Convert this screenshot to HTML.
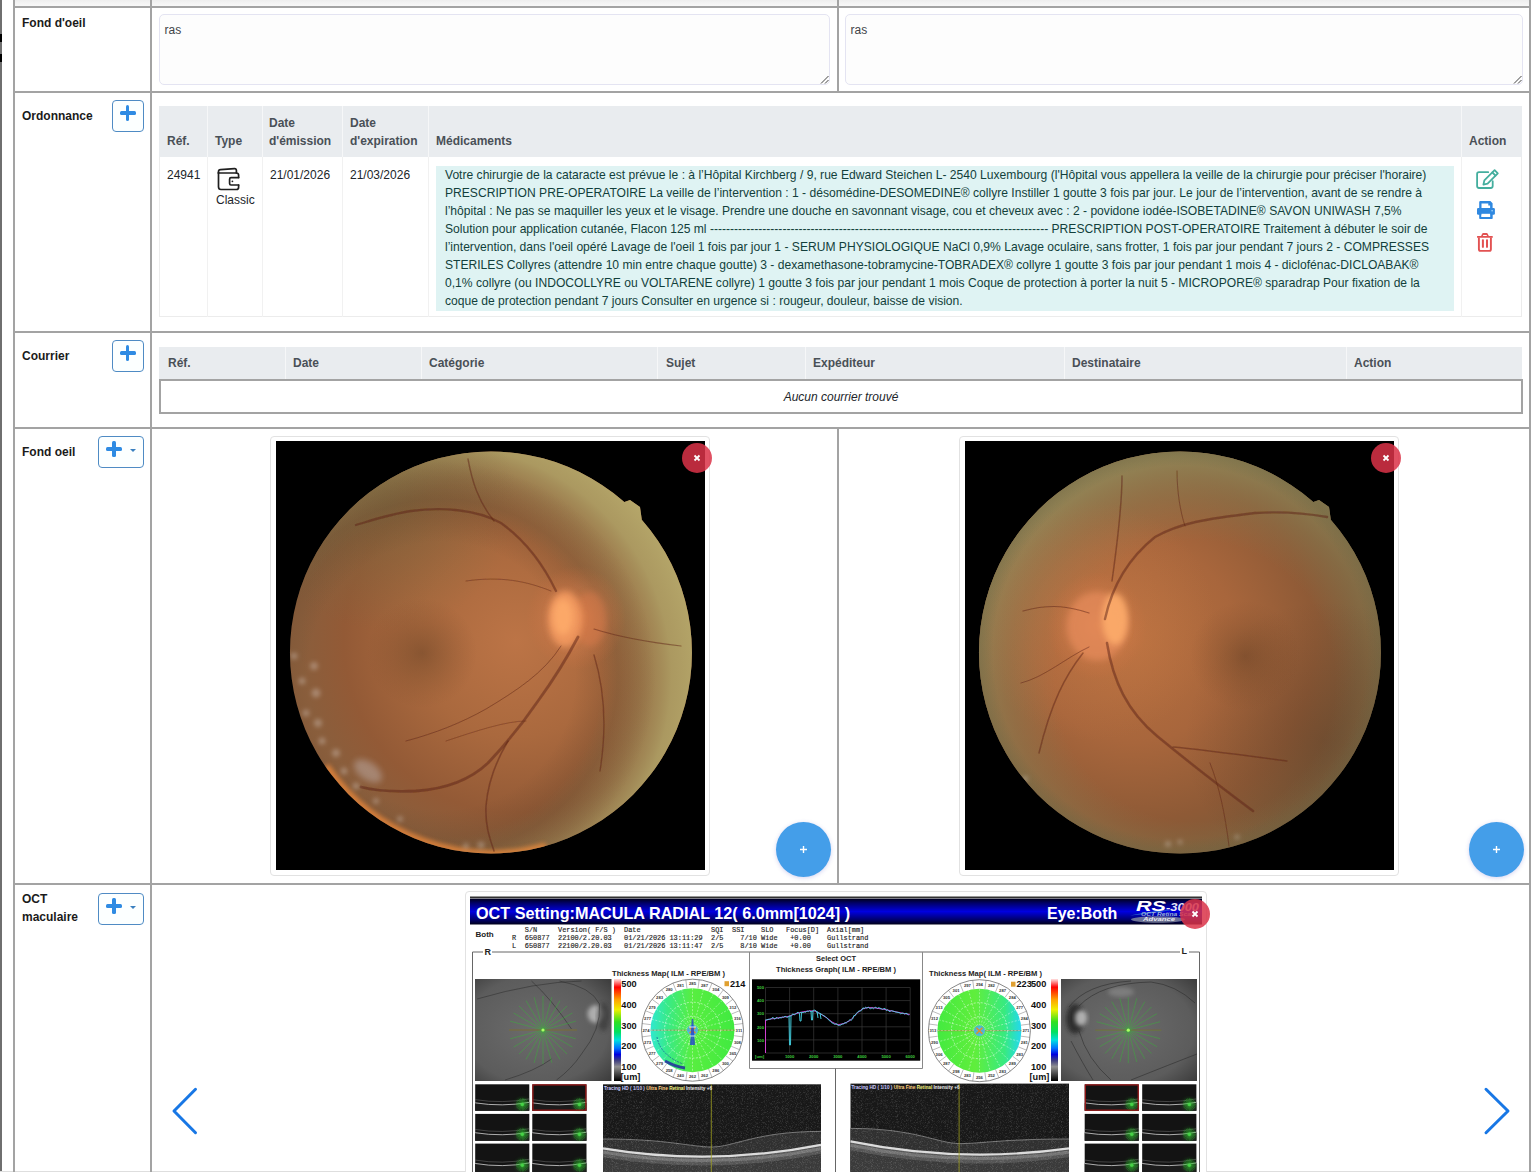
<!DOCTYPE html>
<html><head><meta charset="utf-8">
<style>
*{margin:0;padding:0;box-sizing:border-box}
html,body{width:1536px;height:1172px;overflow:hidden;background:#fff}
body{position:relative;font-family:"Liberation Sans",sans-serif;font-size:12px;color:#212529}
.a{position:absolute}
.hl{position:absolute;height:2px;background:#a3a3a3}
.vl{position:absolute;width:2px;background:#a3a3a3}
.lbl{position:absolute;font-weight:bold;font-size:12px;color:#1b1b1b;line-height:18px;white-space:nowrap}
.ta{position:absolute;border:1px solid #e4e4f2;border-radius:5px;background:#fdfdfd;color:#3f4448;font-size:12px}
.btn{position:absolute;border:1px solid #4f8bc4;border-radius:4px;background:#fcffff}
.plus{position:absolute;background:#2f8be3;border-radius:1.5px}
.th{position:absolute;font-weight:bold;color:#495057;line-height:18px;white-space:nowrap}
.td{position:absolute;color:#212529;line-height:18px;white-space:nowrap}
.med{position:absolute;color:#123f3b;line-height:18px;white-space:nowrap;font-size:12.1px}
</style></head><body>
<!-- page left edge -->
<div class="a" style="left:0;top:0;width:2px;height:1172px;background:#6f6f6f"></div>
<div class="a" style="left:0;top:34px;width:2px;height:8px;background:#000"></div>
<div class="a" style="left:0;top:54px;width:2px;height:8px;background:#000"></div>
<!-- top partial row -->
<div class="a" style="left:15px;top:0;width:1514px;height:6px;background:linear-gradient(#eeeeee,#f8f8f8)"></div>
<div class="a" style="left:0;top:1171px;width:1536px;height:1px;background:#dedede"></div>

<!-- grid lines -->
<div class="vl" style="left:13px;top:0;height:1172px"></div>
<div class="vl" style="left:1529px;top:0;height:1172px"></div>
<div class="vl" style="left:150px;top:0;height:1172px"></div>
<div class="vl" style="left:837px;top:0;height:92px"></div>
<div class="vl" style="left:837px;top:428px;height:456px"></div>
<div class="hl" style="left:13px;top:6px;width:1518px"></div>
<div class="hl" style="left:13px;top:91px;width:1518px"></div>
<div class="hl" style="left:13px;top:331px;width:1518px"></div>
<div class="hl" style="left:13px;top:427px;width:1518px"></div>
<div class="hl" style="left:13px;top:883px;width:1518px"></div>

<!-- labels -->
<div class="lbl" style="left:22px;top:14px">Fond d'oeil</div>
<div class="lbl" style="left:22px;top:107px">Ordonnance</div>
<div class="lbl" style="left:22px;top:347px">Courrier</div>
<div class="lbl" style="left:22px;top:443px">Fond oeil</div>
<div class="lbl" style="left:22px;top:890px">OCT<br>maculaire</div>

<!-- buttons -->
<div class="btn" style="left:112px;top:100px;width:32px;height:32px"><div class="plus" style="left:6.6px;top:10.2px;width:16px;height:3.7px"></div><div class="plus" style="left:12.75px;top:4.3px;width:3.7px;height:15.5px"></div></div>
<div class="btn" style="left:112px;top:340px;width:32px;height:32px"><div class="plus" style="left:6.6px;top:10.2px;width:16px;height:3.7px"></div><div class="plus" style="left:12.75px;top:4.3px;width:3.7px;height:15.5px"></div></div>
<div class="btn" style="left:98px;top:436px;width:46px;height:32px"><div class="plus" style="left:7.1px;top:10.3px;width:16px;height:3.7px"></div><div class="plus" style="left:13.25px;top:4.4px;width:3.7px;height:15.5px"></div><div class="a" style="left:31px;top:12px;width:0;height:0;border-left:3px solid transparent;border-right:3px solid transparent;border-top:3px solid #3a80c0"></div></div>
<div class="btn" style="left:98px;top:893px;width:46px;height:32px"><div class="plus" style="left:7.1px;top:10.3px;width:16px;height:3.7px"></div><div class="plus" style="left:13.25px;top:4.4px;width:3.7px;height:15.5px"></div><div class="a" style="left:31px;top:12px;width:0;height:0;border-left:3px solid transparent;border-right:3px solid transparent;border-top:3px solid #3a80c0"></div></div>

<!-- textareas -->
<div class="ta" style="left:159px;top:14px;width:671px;height:71px"><div class="a" style="left:4.5px;top:8px">ras</div><svg class="a" style="left:658px;top:58px" width="12" height="12" viewBox="0 0 12 12"><path d="M3,10.5 L10.5,3 M7,10.5 L10.5,7" stroke="#444" stroke-width="1"/></svg></div>
<div class="ta" style="left:845px;top:14px;width:678px;height:71px"><div class="a" style="left:4.5px;top:8px">ras</div><svg class="a" style="left:665px;top:58px" width="12" height="12" viewBox="0 0 12 12"><path d="M3,10.5 L10.5,3 M7,10.5 L10.5,7" stroke="#444" stroke-width="1"/></svg></div>

<!-- ordonnance table -->
<div class="a" style="left:159px;top:106px;width:1363px;height:211px;border:1px solid #ececec;border-top:0"></div>
<div class="a" style="left:159px;top:106px;width:1363px;height:51px;background:#e9ecef"></div>
<div class="a" style="left:207px;top:106px;width:1px;height:51px;background:#f6f7f8"></div>
<div class="a" style="left:207px;top:157px;width:1px;height:160px;background:#f1f1f1"></div>
<div class="a" style="left:262px;top:106px;width:1px;height:51px;background:#f6f7f8"></div>
<div class="a" style="left:262px;top:157px;width:1px;height:160px;background:#f1f1f1"></div>
<div class="a" style="left:342px;top:106px;width:1px;height:51px;background:#f6f7f8"></div>
<div class="a" style="left:342px;top:157px;width:1px;height:160px;background:#f1f1f1"></div>
<div class="a" style="left:428px;top:106px;width:1px;height:51px;background:#f6f7f8"></div>
<div class="a" style="left:428px;top:157px;width:1px;height:160px;background:#f1f1f1"></div>
<div class="a" style="left:1461px;top:106px;width:1px;height:51px;background:#f6f7f8"></div>
<div class="a" style="left:1461px;top:157px;width:1px;height:160px;background:#f1f1f1"></div>
<div class="th" style="left:167px;top:132px">Réf.</div>
<div class="th" style="left:215px;top:132px">Type</div>
<div class="th" style="left:269px;top:114px">Date<br>d'émission</div>
<div class="th" style="left:350px;top:114px">Date<br>d'expiration</div>
<div class="th" style="left:436px;top:132px">Médicaments</div>
<div class="th" style="left:1469px;top:132px">Action</div>
<div class="td" style="left:167px;top:166px">24941</div>
<div class="td" style="left:216px;top:191px">Classic</div>
<div class="td" style="left:270px;top:166px">21/01/2026</div>
<div class="td" style="left:350px;top:166px">21/03/2026</div>
<svg class="a" style="left:210px;top:160px" width="36" height="36" viewBox="0 0 36 36"><g fill="none" stroke="#1f1f1f" stroke-width="1.7" stroke-linejoin="round" stroke-linecap="round">
<path d="M8.5,12.5 L8.5,26.8 Q8.5,29.5 11,29.5 L26.5,29.5 Q28.6,29.5 28.6,27.2 L28.6,25"/>
<path d="M28.6,17.5 L28.6,15.3 Q28.6,13 26.3,13 L8.5,13"/>
<path d="M8.5,13 L8.5,11.6 Q8.5,9.8 10.6,9.6 L24.5,8.6 Q26.4,8.5 26.4,10.6 L26.4,13"/>
<path d="M28.6,17.6 L21,17.6 Q19.6,17.6 19.6,19.2 L19.6,23.4 Q19.6,25 21,25 L28.6,25"/>
</g><circle cx="22.4" cy="21.3" r="0.9" fill="#1f1f1f"/></svg>
<div class="a" style="left:436px;top:166px;width:1018px;height:145px;background:#dff3f3"></div>
<div class="med" style="left:445px;top:166px">Votre chirurgie de la cataracte est prévue le : à l’Hôpital Kirchberg / 9, rue Edward Steichen L- 2540 Luxembourg (l'Hôpital vous appellera la veille de la chirurgie pour préciser l'horaire)</div>
<div class="med" style="left:445px;top:184px">PRESCRIPTION PRE-OPERATOIRE La veille de l’intervention : 1 - désomédine-DESOMEDINE® collyre Instiller 1 goutte 3 fois par jour. Le jour de l’intervention, avant de se rendre à</div>
<div class="med" style="left:445px;top:202px">l’hôpital : Ne pas se maquiller les yeux et le visage. Prendre une douche en savonnant visage, cou et cheveux avec : 2 - povidone iodée-ISOBETADINE® SAVON UNIWASH 7,5%</div>
<div class="med" style="left:445px;top:220px">Solution pour application cutanée, Flacon 125 ml ------------------------------------------------------------------------------------ PRESCRIPTION POST-OPERATOIRE Traitement à débuter le soir de</div>
<div class="med" style="left:445px;top:238px">l’intervention, dans l'oeil opéré Lavage de l'oeil 1 fois par jour 1 - SERUM PHYSIOLOGIQUE NaCl 0,9% Lavage oculaire, sans frotter, 1 fois par jour pendant 7 jours 2 - COMPRESSES</div>
<div class="med" style="left:445px;top:256px">STERILES Collyres (attendre 10 min entre chaque goutte) 3 - dexamethasone-tobramycine-TOBRADEX® collyre 1 goutte 3 fois par jour pendant 1 mois 4 - diclofénac-DICLOABAK®</div>
<div class="med" style="left:445px;top:274px">0,1% collyre (ou INDOCOLLYRE ou VOLTARENE collyre) 1 goutte 3 fois par jour pendant 1 mois Coque de protection à porter la nuit 5 - MICROPORE® sparadrap Pour fixation de la</div>
<div class="med" style="left:445px;top:292px">coque de protection pendant 7 jours Consulter en urgence si : rougeur, douleur, baisse de vision.</div>
<svg class="a" style="left:1472px;top:165px" width="30" height="28" viewBox="0 0 30 28"><g fill="none" stroke="#44ae9e" stroke-width="1.8" stroke-linejoin="round" stroke-linecap="round">
<path d="M16.2,7.2 L7,7.2 Q5.1,7.2 5.1,9.1 L5.1,21.1 Q5.1,23 7,23 L18.8,23 Q20.7,23 20.7,21.1 L20.7,16.2"/>
<path d="M11.4,19.6 L12.35,15.4 L22.6,5.2 L25.8,8.4 L15.6,18.66 Z"/><path d="M20.4,7.5 L23.5,10.6"/></g></svg>
<svg class="a" style="left:1472px;top:196px" width="30" height="28" viewBox="0 0 30 28"><g fill="#2f88e0">
<path fill-rule="evenodd" d="M7.2,12.5 L7.2,6.3 Q7.2,5.1 8.4,5.1 L18.4,5.1 L20.6,7.3 L20.6,12.5 Z M9.5,7.6 L9.5,12.8 L18.1,12.8 L18.1,9.6 L16.3,9.6 L16.3,7.6 Z"/>
<rect x="5" y="12" width="17.9" height="6.7" rx="1.3"/>
<path fill-rule="evenodd" d="M7.2,17.5 L20.7,17.5 L20.7,22.2 Q20.7,23 19.9,23 L8,23 Q7.2,23 7.2,22.2 Z M9.5,17.8 L9.5,21 L18.1,21 L18.1,17.8 Z"/>
</g><rect x="9.5" y="17.8" width="8.6" height="3.2" fill="#fff"/><circle cx="20.1" cy="14.8" r="0.7" fill="#bfe8ff"/></svg>
<svg class="a" style="left:1472px;top:228px" width="30" height="28" viewBox="0 0 30 28"><g fill="#e25252">
<rect x="5" y="8" width="15.8" height="1.7" rx="0.5"/>
<path fill-rule="evenodd" d="M9,8.2 L10,5.9 Q10.4,5.1 11.3,5.1 L14.6,5.1 Q15.5,5.1 15.9,5.9 L16.9,8.2 Z M10.9,7.9 L11.3,6.9 L14.6,6.9 L15,7.9 Z"/>
<rect x="9.9" y="11.2" width="2" height="8.6" rx="0.9"/><rect x="14" y="11.2" width="2" height="8.6" rx="0.9"/></g>
<path d="M6.9,9.5 L6.9,21.3 Q6.9,22.9 8.5,22.9 L17.3,22.9 Q18.9,22.9 18.9,21.3 L18.9,9.5" fill="none" stroke="#e25252" stroke-width="1.9"/></svg>

<!-- courrier table -->
<div class="a" style="left:159px;top:347px;width:1363px;height:33px;background:#e9ecef"></div>
<div class="a" style="left:285px;top:347px;width:1px;height:33px;background:#f6f7f8"></div>
<div class="a" style="left:421px;top:347px;width:1px;height:33px;background:#f6f7f8"></div>
<div class="a" style="left:657px;top:347px;width:1px;height:33px;background:#f6f7f8"></div>
<div class="a" style="left:805px;top:347px;width:1px;height:33px;background:#f6f7f8"></div>
<div class="a" style="left:1064px;top:347px;width:1px;height:33px;background:#f6f7f8"></div>
<div class="a" style="left:1346px;top:347px;width:1px;height:33px;background:#f6f7f8"></div>
<div class="th" style="left:168px;top:354px">Réf.</div>
<div class="th" style="left:293px;top:354px">Date</div>
<div class="th" style="left:429px;top:354px">Catégorie</div>
<div class="th" style="left:666px;top:354px">Sujet</div>
<div class="th" style="left:813px;top:354px">Expéditeur</div>
<div class="th" style="left:1072px;top:354px">Destinataire</div>
<div class="th" style="left:1354px;top:354px">Action</div>
<div class="a" style="left:159px;top:379px;width:1364px;height:35px;border:2px solid #a3a3a3"></div>
<div class="td" style="left:159px;top:388px;width:1364px;text-align:center;font-style:italic">Aucun courrier trouvé</div>

<!--FUNDUS--><!-- fundus frames -->
<div class="a" style="left:270px;top:436px;width:440px;height:440px;border:1px solid #e2e2e2;border-radius:4px;background:#fff"></div>
<div class="a" style="left:959px;top:436px;width:440px;height:440px;border:1px solid #e2e2e2;border-radius:4px;background:#fff"></div>
<svg class="a" style="left:276px;top:441px" width="429" height="429" viewBox="0 0 429 429">
<defs>
<clipPath id="f1c"><path d="M215,10.5 A201,201 0 1,1 214.9,10.5 Z M340,64 L354,59 L364,66 L366,80 L352,76 Z"/></clipPath>

<radialGradient id="f1b" cx="240" cy="200" r="215" gradientUnits="userSpaceOnUse"><stop offset="0" stop-color="#bc7446"/><stop offset="0.45" stop-color="#aa693e"/><stop offset="0.8" stop-color="#935a36"/><stop offset="1" stop-color="#8a5e3c"/></radialGradient>
<radialGradient id="f1t" cx="165" cy="235" r="268" gradientUnits="userSpaceOnUse"><stop offset="0.6" stop-color="#8a7a50" stop-opacity="0"/><stop offset="0.74" stop-color="#9a8a58" stop-opacity="0.5"/><stop offset="0.86" stop-color="#ad9e64" stop-opacity="0.92"/><stop offset="1" stop-color="#b8aa6c" stop-opacity="1"/></radialGradient>
<radialGradient id="f1o" cx="165" cy="235" r="268" gradientUnits="userSpaceOnUse"><stop offset="0.5" stop-color="#5a4028" stop-opacity="0"/><stop offset="0.66" stop-color="#5a4028" stop-opacity="0.28"/><stop offset="0.8" stop-color="#5a4028" stop-opacity="0"/></radialGradient>
<radialGradient id="f1k" cx="110" cy="60" r="130" gradientUnits="userSpaceOnUse"><stop offset="0" stop-color="#7a6a40" stop-opacity="0.55"/><stop offset="1" stop-color="#7a6a40" stop-opacity="0"/></radialGradient>
<radialGradient id="f1r" cx="215" cy="211.5" r="201" gradientUnits="userSpaceOnUse"><stop offset="0.9" stop-color="#e07a38" stop-opacity="0"/><stop offset="1" stop-color="#f08a3a" stop-opacity="0.8"/></radialGradient>
<radialGradient id="f1f" cx="146" cy="212" r="55" gradientUnits="userSpaceOnUse"><stop offset="0" stop-color="#5a3a20" stop-opacity="0.42"/><stop offset="0.4" stop-color="#6a4426" stop-opacity="0.28"/><stop offset="1" stop-color="#7a4a2a" stop-opacity="0"/></radialGradient>
<radialGradient id="f1dg" cx="0.5" cy="0.5" r="0.5"><stop offset="0" stop-color="#e88a50" stop-opacity="0.7"/><stop offset="0.6" stop-color="#d88050" stop-opacity="0.35"/><stop offset="1" stop-color="#d07040" stop-opacity="0"/></radialGradient>
<filter id="f1bl" x="-10%" y="-10%" width="120%" height="120%"><feGaussianBlur stdDeviation="0.6"/></filter>
<filter id="f1bd" x="-50%" y="-50%" width="200%" height="200%"><feGaussianBlur stdDeviation="3"/></filter>
<filter id="f1bs" x="-50%" y="-50%" width="200%" height="200%"><feGaussianBlur stdDeviation="2"/></filter>
</defs>
<rect width="429" height="429" fill="#000"/>
<g clip-path="url(#f1c)">
<rect width="429" height="429" fill="url(#f1b)"/>
<rect width="429" height="429" fill="url(#f1t)"/>
<rect width="429" height="429" fill="url(#f1k)"/>
<rect width="429" height="429" fill="url(#f1o)"/>
<path d="M50,325 A201,201 0 0,0 270,405" fill="none" stroke="#f08a3a" stroke-width="7" opacity="0.75" filter="url(#f1bs)"/><ellipse cx="92" cy="330" rx="16" ry="9" transform="rotate(35 92 330)" fill="#d8dce8" opacity="0.32" filter="url(#f1bd)"/>
<rect width="429" height="429" fill="url(#f1f)"/>
<ellipse cx="300" cy="177" rx="50" ry="52" fill="url(#f1dg)"/>
<ellipse cx="314" cy="178" rx="16" ry="27" fill="#dc7a4c" opacity="0.45" filter="url(#f1bd)"/>
<ellipse cx="289" cy="178" rx="17" ry="28" fill="#f39a60" opacity="0.9" filter="url(#f1bd)"/>
<ellipse cx="287" cy="176" rx="10" ry="18" fill="#ffad6c" opacity="0.8" filter="url(#f1bd)"/>
<g fill="none" stroke="#5e2414" stroke-opacity="0.5" stroke-linecap="round" filter="url(#f1bl)"><path d="M302,196 C292,215 278,238 262,260 C245,285 228,305 212,322 C195,338 170,348 140,350 C115,351 100,350 85,346" stroke-width="2.8"/><path d="M232,300 C220,320 212,340 210,365 C209,385 214,398 218,410" stroke-width="1.6"/><path d="M280,150 C268,125 250,100 225,82 C200,68 165,66 135,70 C115,73 100,78 80,84" stroke-width="2.3"/><path d="M192,18 C196,40 202,60 218,80" stroke-width="1.4"/><path d="M318,188 C340,195 362,200 405,205" stroke-width="1.2"/><path d="M318,214 C326,240 332,280 324,330" stroke-width="1.4"/><path d="M285,205 C268,232 240,250 210,268 C185,282 160,292 130,300" stroke-width="1.0"/><path d="M275,150 C250,140 225,135 190,140" stroke-width="0.9"/><path d="M250,280 C230,280 200,290 170,300" stroke-width="0.8"/></g>
<g fill="#e0d8d0" fill-opacity="0.33" filter="url(#f1bs)"><circle cx="18" cy="215" r="3.5"/><circle cx="38" cy="225" r="4"/><circle cx="26" cy="240" r="3.5"/><circle cx="40" cy="252" r="4.5"/><circle cx="30" cy="272" r="3.5"/><circle cx="42" cy="282" r="4"/><circle cx="46" cy="300" r="3.5"/><circle cx="60" cy="312" r="4"/><circle cx="68" cy="330" r="3.5"/><circle cx="80" cy="345" r="3.5"/><circle cx="100" cy="360" r="3"/><circle cx="124" cy="378" r="3"/><circle cx="205" cy="404" r="3.5"/><circle cx="190" cy="405" r="3"/></g>
</g>
</svg>
<svg class="a" style="left:965px;top:441px" width="429" height="429" viewBox="0 0 429 429">
<defs>
<clipPath id="f2c"><path d="M215,10.5 A201,201 0 1,1 214.9,10.5 Z M340,64 L354,59 L364,66 L366,80 L352,76 Z"/></clipPath>

<radialGradient id="f2b" cx="170" cy="200" r="225" gradientUnits="userSpaceOnUse"><stop offset="0" stop-color="#b8703f"/><stop offset="0.45" stop-color="#a8663c"/><stop offset="0.8" stop-color="#8e5a36"/><stop offset="1" stop-color="#7e5a38"/></radialGradient>
<radialGradient id="f2t" cx="230" cy="240" r="255" gradientUnits="userSpaceOnUse"><stop offset="0.55" stop-color="#8a7a50" stop-opacity="0"/><stop offset="0.72" stop-color="#8a7e52" stop-opacity="0.45"/><stop offset="0.88" stop-color="#928a5a" stop-opacity="0.85"/><stop offset="1" stop-color="#9a9262" stop-opacity="0.95"/></radialGradient>
<radialGradient id="f2o" cx="360" cy="300" r="140" gradientUnits="userSpaceOnUse"><stop offset="0" stop-color="#4a3020" stop-opacity="0.3"/><stop offset="1" stop-color="#4a3020" stop-opacity="0"/></radialGradient>
<radialGradient id="f2k" cx="130" cy="180" r="120" gradientUnits="userSpaceOnUse"><stop offset="0" stop-color="#c87a48" stop-opacity="0.5"/><stop offset="1" stop-color="#c87a48" stop-opacity="0"/></radialGradient>
<radialGradient id="f2r" cx="215" cy="211.5" r="201" gradientUnits="userSpaceOnUse"><stop offset="0.93" stop-color="#6a6040" stop-opacity="0"/><stop offset="1" stop-color="#6a6040" stop-opacity="0.4"/></radialGradient>
<radialGradient id="f2f" cx="280" cy="215" r="55" gradientUnits="userSpaceOnUse"><stop offset="0" stop-color="#5a3a20" stop-opacity="0.42"/><stop offset="0.4" stop-color="#6a4426" stop-opacity="0.28"/><stop offset="1" stop-color="#7a4a2a" stop-opacity="0"/></radialGradient>
<radialGradient id="f2dg" cx="0.5" cy="0.5" r="0.5"><stop offset="0" stop-color="#e88a50" stop-opacity="0.7"/><stop offset="0.6" stop-color="#d88050" stop-opacity="0.35"/><stop offset="1" stop-color="#d07040" stop-opacity="0"/></radialGradient>
<filter id="f2bl" x="-10%" y="-10%" width="120%" height="120%"><feGaussianBlur stdDeviation="0.6"/></filter>
<filter id="f2bd" x="-50%" y="-50%" width="200%" height="200%"><feGaussianBlur stdDeviation="3"/></filter>
<filter id="f2bs" x="-50%" y="-50%" width="200%" height="200%"><feGaussianBlur stdDeviation="2"/></filter>
</defs>
<rect width="429" height="429" fill="#000"/>
<g clip-path="url(#f2c)">
<rect width="429" height="429" fill="url(#f2b)"/>
<rect width="429" height="429" fill="url(#f2t)"/>
<rect width="429" height="429" fill="url(#f2k)"/>
<rect width="429" height="429" fill="url(#f2o)"/>
<rect x="0" y="0" width="429" height="429" fill="url(#f2r)"/>
<rect width="429" height="429" fill="url(#f2f)"/>
<ellipse cx="132" cy="185" rx="50" ry="54" fill="url(#f2dg)"/>
<ellipse cx="132" cy="185" rx="30" ry="34" fill="#e48a5a" opacity="0.75" filter="url(#f2bd)"/>
<ellipse cx="150" cy="178" rx="13" ry="26" fill="#ffae6c" opacity="0.85" filter="url(#f2bd)"/>
<g fill="none" stroke="#5e2414" stroke-opacity="0.5" stroke-linecap="round" filter="url(#f2bl)"><path d="M140,178 C146,150 160,120 190,96 C215,82 240,78 290,72 C320,70 340,72 362,76" stroke-width="2.4"/><path d="M157,35 C157,60 154,90 147,140" stroke-width="1.5"/><path d="M142,202 C148,240 162,270 192,295 C215,314 245,338 288,370" stroke-width="2.5"/><path d="M208,306 C232,308 262,312 322,320" stroke-width="1.3"/><path d="M118,212 C100,235 86,262 74,312" stroke-width="1.5"/><path d="M124,172 C105,166 88,162 58,170" stroke-width="1.1"/><path d="M124,206 C102,216 80,236 56,242" stroke-width="1.0"/><path d="M245,322 C254,345 260,372 264,405" stroke-width="1.0"/><path d="M220,85 C215,70 212,50 212,30" stroke-width="1.0"/></g>
<g fill="#e0d8d0" fill-opacity="0.33" filter="url(#f2bs)"><circle cx="203" cy="403" r="3"/><circle cx="215" cy="401" r="2.5"/><circle cx="60" cy="338" r="3"/><circle cx="272" cy="396" r="2.5"/></g>
</g>
</svg>
<div class="a" style="left:682px;top:443px;width:30px;height:30px;border-radius:50%;background:rgba(218,50,72,0.85)"><svg class="a" style="left:11px;top:11px" width="8" height="8" viewBox="0 0 8 8"><path d="M1.5,1.5 L6.5,6.5 M6.5,1.5 L1.5,6.5" stroke="#fff" stroke-width="1.8"/></svg></div>
<div class="a" style="left:1371px;top:443px;width:30px;height:30px;border-radius:50%;background:rgba(218,50,72,0.85)"><svg class="a" style="left:11px;top:11px" width="8" height="8" viewBox="0 0 8 8"><path d="M1.5,1.5 L6.5,6.5 M6.5,1.5 L1.5,6.5" stroke="#fff" stroke-width="1.8"/></svg></div>
<div class="a" style="left:776px;top:822px;width:55px;height:55px;border-radius:50%;background:#449ee9;box-shadow:0 1px 4px rgba(80,80,200,0.25)"><svg class="a" style="left:23px;top:23px" width="9" height="9" viewBox="0 0 9 9"><path d="M4.5,1 L4.5,8 M1,4.5 L8,4.5" stroke="#fff" stroke-width="1.4"/></svg></div>
<div class="a" style="left:1469px;top:822px;width:55px;height:55px;border-radius:50%;background:#449ee9;box-shadow:0 1px 4px rgba(80,80,200,0.25)"><svg class="a" style="left:23px;top:23px" width="9" height="9" viewBox="0 0 9 9"><path d="M4.5,1 L4.5,8 M1,4.5 L8,4.5" stroke="#fff" stroke-width="1.4"/></svg></div>
<!--/FUNDUS-->
<!--OCT--><div class="a" style="left:465px;top:891px;width:742px;height:300px;border:1px solid #e2e2e2;border-radius:4px;background:#fff"></div>
<svg class="a" style="left:460px;top:885px" width="750" height="287" viewBox="460 885 750 287">
<defs>
<linearGradient id="ob" x1="0" y1="0" x2="0" y2="1"><stop offset="0" stop-color="#000018"/><stop offset="0.18" stop-color="#00006a"/><stop offset="0.5" stop-color="#0000e0"/><stop offset="0.82" stop-color="#00006a"/><stop offset="1" stop-color="#000018"/></linearGradient>
<linearGradient id="cb" x1="0" y1="0" x2="0" y2="1"><stop offset="0" stop-color="#ffe0e0"/><stop offset="0.08" stop-color="#ff0000"/><stop offset="0.2" stop-color="#ffa000"/><stop offset="0.3" stop-color="#f0f000"/><stop offset="0.42" stop-color="#30e020"/><stop offset="0.52" stop-color="#00e060"/><stop offset="0.6" stop-color="#00e0e0"/><stop offset="0.68" stop-color="#0070ff"/><stop offset="0.74" stop-color="#0000e0"/><stop offset="0.8" stop-color="#404080"/><stop offset="0.86" stop-color="#909090"/><stop offset="1" stop-color="#000"/></linearGradient>
<radialGradient id="gfR" cx="0.45" cy="0.5" r="0.75"><stop offset="0" stop-color="#6c6c6c"/><stop offset="0.7" stop-color="#5c5c5c"/><stop offset="1" stop-color="#3a3a3a"/></radialGradient>
<radialGradient id="tmL" cx="0.5" cy="0.5" r="0.5"><stop offset="0" stop-color="#22dd44"/><stop offset="0.8" stop-color="#22dd55"/><stop offset="1" stop-color="#22ddaa"/></radialGradient>
<linearGradient id="tmLx" x1="0" y1="0" x2="1" y2="0"><stop offset="0" stop-color="#30e8d0"/><stop offset="0.2" stop-color="#38ea88"/><stop offset="0.5" stop-color="#58ee40"/><stop offset="1" stop-color="#40ea40"/></linearGradient>
<linearGradient id="tmRx" x1="0" y1="0" x2="1" y2="0"><stop offset="0" stop-color="#44ea40"/><stop offset="0.45" stop-color="#60ee3c"/><stop offset="0.8" stop-color="#38ea80"/><stop offset="1" stop-color="#22d8f0"/></linearGradient>
<filter id="noise" x="0" y="0" width="100%" height="100%"><feTurbulence type="fractalNoise" baseFrequency="2.2" numOctaves="1" seed="4" result="n"/><feColorMatrix in="n" type="matrix" values="0 0 0 0 1  0 0 0 0 1  0 0 0 0 1  3 0 0 0 -1.45"/><feComposite in2="SourceGraphic" operator="in"/></filter>
<filter id="bl1"><feGaussianBlur stdDeviation="0.6"/></filter>
<filter id="bl2" x="-20%" y="-20%" width="140%" height="140%"><feGaussianBlur stdDeviation="2"/></filter>
</defs>
<rect x="470" y="896.5" width="732" height="1.5" fill="#333"/>
<rect x="470" y="898.5" width="732" height="26" fill="url(#ob)"/>
<text x="476" y="918.5" font-family="Liberation Sans" font-weight="bold" font-size="16.2" fill="#fff">OCT Setting:MACULA RADIAL 12( 6.0mm[1024] )</text>
<text x="1047" y="918.5" font-family="Liberation Sans" font-weight="bold" font-size="16" fill="#fff">Eye:Both</text>
<path d="M1130,915.5 Q1150,911 1175,909.5 L1150,913.5 Z" fill="#3a8ad8" opacity="0.8"/>
<ellipse cx="1158" cy="919.5" rx="27" ry="3.2" fill="#9098a8" opacity="0.75"/>
<text x="1136" y="911" font-family="Liberation Sans" font-weight="bold" font-style="italic" font-size="15" fill="#fff" textLength="30" lengthAdjust="spacingAndGlyphs">RS</text>
<text x="1166" y="911" font-family="Liberation Sans" font-weight="bold" font-style="italic" font-size="10" fill="#e8e8f4" textLength="33" lengthAdjust="spacingAndGlyphs">-3000</text>
<text x="1141" y="916" font-family="Liberation Sans" font-weight="bold" font-style="italic" font-size="5" fill="#9ab0d8" textLength="54" lengthAdjust="spacingAndGlyphs">OCT Retina Scan</text>
<text x="1143" y="921" font-family="Liberation Sans" font-weight="bold" font-style="italic" font-size="5.2" fill="#e8e8f0" textLength="32" lengthAdjust="spacingAndGlyphs">Advance</text>
<text x="475.5" y="937" font-family="Liberation Sans" font-weight="bold" font-size="8" fill="#222">Both</text>
<text x="524.8" y="932.3" font-family="Liberation Mono" font-size="6.9" fill="#222" stroke="#222" stroke-width="0.15" xml:space="preserve">S/N</text>
<text x="524.8" y="940.3" font-family="Liberation Mono" font-size="6.9" fill="#222" stroke="#222" stroke-width="0.15" xml:space="preserve">650877</text>
<text x="524.8" y="948.4" font-family="Liberation Mono" font-size="6.9" fill="#222" stroke="#222" stroke-width="0.15" xml:space="preserve">650877</text>
<text x="558" y="932.3" font-family="Liberation Mono" font-size="6.9" fill="#222" stroke="#222" stroke-width="0.15" xml:space="preserve">Version( F/S )</text>
<text x="558" y="940.3" font-family="Liberation Mono" font-size="6.9" fill="#222" stroke="#222" stroke-width="0.15" xml:space="preserve">22100/2.20.03</text>
<text x="558" y="948.4" font-family="Liberation Mono" font-size="6.9" fill="#222" stroke="#222" stroke-width="0.15" xml:space="preserve">22100/2.20.03</text>
<text x="624" y="932.3" font-family="Liberation Mono" font-size="6.9" fill="#222" stroke="#222" stroke-width="0.15" xml:space="preserve">Date</text>
<text x="624" y="940.3" font-family="Liberation Mono" font-size="6.9" fill="#222" stroke="#222" stroke-width="0.15" xml:space="preserve">01/21/2026 13:11:29</text>
<text x="624" y="948.4" font-family="Liberation Mono" font-size="6.9" fill="#222" stroke="#222" stroke-width="0.15" xml:space="preserve">01/21/2026 13:11:47</text>
<text x="711" y="932.3" font-family="Liberation Mono" font-size="6.9" fill="#222" stroke="#222" stroke-width="0.15" xml:space="preserve">SQI</text>
<text x="711" y="940.3" font-family="Liberation Mono" font-size="6.9" fill="#222" stroke="#222" stroke-width="0.15" xml:space="preserve">2/5</text>
<text x="711" y="948.4" font-family="Liberation Mono" font-size="6.9" fill="#222" stroke="#222" stroke-width="0.15" xml:space="preserve">2/5</text>
<text x="732" y="932.3" font-family="Liberation Mono" font-size="6.9" fill="#222" stroke="#222" stroke-width="0.15" xml:space="preserve">SSI</text>
<text x="732" y="940.3" font-family="Liberation Mono" font-size="6.9" fill="#222" stroke="#222" stroke-width="0.15" xml:space="preserve">  7/10</text>
<text x="732" y="948.4" font-family="Liberation Mono" font-size="6.9" fill="#222" stroke="#222" stroke-width="0.15" xml:space="preserve">  8/10</text>
<text x="761" y="932.3" font-family="Liberation Mono" font-size="6.9" fill="#222" stroke="#222" stroke-width="0.15" xml:space="preserve">SLO</text>
<text x="761" y="940.3" font-family="Liberation Mono" font-size="6.9" fill="#222" stroke="#222" stroke-width="0.15" xml:space="preserve">Wide</text>
<text x="761" y="948.4" font-family="Liberation Mono" font-size="6.9" fill="#222" stroke="#222" stroke-width="0.15" xml:space="preserve">Wide</text>
<text x="786" y="932.3" font-family="Liberation Mono" font-size="6.9" fill="#222" stroke="#222" stroke-width="0.15" xml:space="preserve">Focus[D]</text>
<text x="786" y="940.3" font-family="Liberation Mono" font-size="6.9" fill="#222" stroke="#222" stroke-width="0.15" xml:space="preserve"> +0.00</text>
<text x="786" y="948.4" font-family="Liberation Mono" font-size="6.9" fill="#222" stroke="#222" stroke-width="0.15" xml:space="preserve"> +0.00</text>
<text x="827" y="932.3" font-family="Liberation Mono" font-size="6.9" fill="#222" stroke="#222" stroke-width="0.15" xml:space="preserve">Axial[mm]</text>
<text x="827" y="940.3" font-family="Liberation Mono" font-size="6.9" fill="#222" stroke="#222" stroke-width="0.15" xml:space="preserve">Gullstrand</text>
<text x="827" y="948.4" font-family="Liberation Mono" font-size="6.9" fill="#222" stroke="#222" stroke-width="0.15" xml:space="preserve">Gullstrand</text>
<text x="512" y="940.4" font-family="Liberation Mono" font-size="6.9" fill="#222" stroke="#222" stroke-width="0.15">R</text><text x="512" y="948.4" font-family="Liberation Mono" font-size="6.9" fill="#222" stroke="#222" stroke-width="0.15">L</text>
<path d="M472.5,1172 L472.5,952 L1199.5,952 L1199.5,1172" fill="none" stroke="#666" stroke-width="1"/>
<path d="M749.5,952 L749.5,1068.5 L922.5,1068.5 L922.5,952" fill="none" stroke="#888" stroke-width="1"/>
<path d="M835.5,1068.5 L835.5,1172" stroke="#666" stroke-width="1"/>
<rect x="483" y="946" width="9" height="10" fill="#fff"/><text x="484.5" y="955" font-family="Liberation Sans" font-weight="bold" font-size="9" fill="#222">R</text>
<rect x="1180" y="946" width="9" height="10" fill="#fff"/><text x="1181.5" y="954" font-family="Liberation Sans" font-weight="bold" font-size="9" fill="#222">L</text>
<text x="612" y="975.5" font-family="Liberation Sans" font-weight="bold" fill="#222" font-size="7.7" textLength="113" lengthAdjust="spacingAndGlyphs">Thickness Map( ILM - RPE/BM )</text>
<text x="929" y="976" font-family="Liberation Sans" font-weight="bold" fill="#222" font-size="7.7" textLength="113" lengthAdjust="spacingAndGlyphs">Thickness Map( ILM - RPE/BM )</text>
<text x="816" y="960.5" font-family="Liberation Sans" font-weight="bold" fill="#222" font-size="7.5" textLength="40" lengthAdjust="spacingAndGlyphs">Select OCT</text>
<text x="776" y="971.5" font-family="Liberation Sans" font-weight="bold" fill="#222" font-size="8" textLength="120" lengthAdjust="spacingAndGlyphs">Thickness Graph( ILM - RPE/BM )</text>
<rect x="475" y="979" width="136.5" height="102" fill="url(#gfR)"/><ellipse cx="595.5" cy="1014" rx="8" ry="9" fill="#d8d8d8" opacity="0.65" filter="url(#bl2)"/><ellipse cx="603.5" cy="1017" rx="6" ry="14" fill="#303030" opacity="0.6" filter="url(#bl2)"/><path d="M559.5,981 Q591.5,987 599.5,1004 Q601.5,1029 581.5,1054 Q571.5,1069 556.5,1080 M531.5,981 Q551.5,999 571.5,1029 M477,999 Q535,982 581.5,981 M505,1080 Q535,1071 551.5,1059" fill="none" stroke="#2a2a2a" stroke-width="1" opacity="0.5"/>
<line x1="509" y1="1030" x2="577" y2="1030" stroke="#a83838" stroke-width="1.3" opacity="0.55"/><line x1="543.0" y1="996.0" x2="543.0" y2="1064.0" stroke="#30c030" stroke-width="0.7" opacity="0.6"/><line x1="551.8" y1="997.2" x2="534.2" y2="1062.8" stroke="#30c030" stroke-width="0.7" opacity="0.6"/><line x1="560.0" y1="1000.6" x2="526.0" y2="1059.4" stroke="#30c030" stroke-width="0.7" opacity="0.6"/><line x1="567.0" y1="1006.0" x2="519.0" y2="1054.0" stroke="#30c030" stroke-width="0.7" opacity="0.6"/><line x1="572.4" y1="1013.0" x2="513.6" y2="1047.0" stroke="#30c030" stroke-width="0.7" opacity="0.6"/><line x1="575.8" y1="1021.2" x2="510.2" y2="1038.8" stroke="#30c030" stroke-width="0.7" opacity="0.6"/><line x1="577.0" y1="1030.0" x2="509.0" y2="1030.0" stroke="#30c030" stroke-width="0.7" opacity="0.6"/><line x1="575.8" y1="1038.8" x2="510.2" y2="1021.2" stroke="#30c030" stroke-width="0.7" opacity="0.6"/><line x1="572.4" y1="1047.0" x2="513.6" y2="1013.0" stroke="#30c030" stroke-width="0.7" opacity="0.6"/><line x1="567.0" y1="1054.0" x2="519.0" y2="1006.0" stroke="#30c030" stroke-width="0.7" opacity="0.6"/><line x1="560.0" y1="1059.4" x2="526.0" y2="1000.6" stroke="#30c030" stroke-width="0.7" opacity="0.6"/><line x1="551.8" y1="1062.8" x2="534.2" y2="997.2" stroke="#30c030" stroke-width="0.7" opacity="0.6"/><circle cx="543" cy="1030" r="1.6" fill="#aaff66"/>
<rect x="1061" y="979" width="136" height="102" fill="url(#gfR)"/><ellipse cx="1075" cy="1019" rx="9" ry="15" fill="#202020" opacity="0.8" filter="url(#bl2)"/><ellipse cx="1081" cy="1018" rx="6" ry="8" fill="#d8d8d8" opacity="0.75" filter="url(#bl2)"/><ellipse cx="1121" cy="992" rx="13" ry="5" fill="#9a9a9a" opacity="0.5" filter="url(#bl2)"/><path d="M1069,1007 Q1086,984 1131,981 M1079,1006 Q1101,983 1151,982 Q1176,985 1195,1003 M1079,1031 Q1087,1059 1111,1080 M1071,1041 Q1083,1064 1093,1080 M1131,1080 Q1171,1064 1197,1054" fill="none" stroke="#2a2a2a" stroke-width="1" opacity="0.55"/>
<line x1="1095.3" y1="1030.2" x2="1161.3" y2="1030.2" stroke="#a83838" stroke-width="1.3" opacity="0.55"/><line x1="1128.3" y1="997.2" x2="1128.3" y2="1063.2" stroke="#30c030" stroke-width="0.7" opacity="0.6"/><line x1="1136.8" y1="998.3" x2="1119.8" y2="1062.1" stroke="#30c030" stroke-width="0.7" opacity="0.6"/><line x1="1144.8" y1="1001.6" x2="1111.8" y2="1058.8" stroke="#30c030" stroke-width="0.7" opacity="0.6"/><line x1="1151.6" y1="1006.9" x2="1105.0" y2="1053.5" stroke="#30c030" stroke-width="0.7" opacity="0.6"/><line x1="1156.9" y1="1013.7" x2="1099.7" y2="1046.7" stroke="#30c030" stroke-width="0.7" opacity="0.6"/><line x1="1160.2" y1="1021.7" x2="1096.4" y2="1038.7" stroke="#30c030" stroke-width="0.7" opacity="0.6"/><line x1="1161.3" y1="1030.2" x2="1095.3" y2="1030.2" stroke="#30c030" stroke-width="0.7" opacity="0.6"/><line x1="1160.2" y1="1038.7" x2="1096.4" y2="1021.7" stroke="#30c030" stroke-width="0.7" opacity="0.6"/><line x1="1156.9" y1="1046.7" x2="1099.7" y2="1013.7" stroke="#30c030" stroke-width="0.7" opacity="0.6"/><line x1="1151.6" y1="1053.5" x2="1105.0" y2="1006.9" stroke="#30c030" stroke-width="0.7" opacity="0.6"/><line x1="1144.8" y1="1058.8" x2="1111.8" y2="1001.6" stroke="#30c030" stroke-width="0.7" opacity="0.6"/><line x1="1136.8" y1="1062.1" x2="1119.8" y2="998.3" stroke="#30c030" stroke-width="0.7" opacity="0.6"/><circle cx="1128.3" cy="1030.2" r="1.6" fill="#aaff66"/>
<rect x="614" y="979" width="7" height="102" fill="url(#cb)"/>
<rect x="1051" y="979" width="7" height="102" fill="url(#cb)"/>
<text x="621.3" y="987.4" font-family="Liberation Sans" font-weight="bold" font-size="9.2" fill="#111">500</text>
<text x="1031" y="987.4" font-family="Liberation Sans" font-weight="bold" font-size="9.2" fill="#111">500</text>
<text x="621.3" y="1008.0" font-family="Liberation Sans" font-weight="bold" font-size="9.2" fill="#111">400</text>
<text x="1031" y="1008.0" font-family="Liberation Sans" font-weight="bold" font-size="9.2" fill="#111">400</text>
<text x="621.3" y="1028.6" font-family="Liberation Sans" font-weight="bold" font-size="9.2" fill="#111">300</text>
<text x="1031" y="1028.6" font-family="Liberation Sans" font-weight="bold" font-size="9.2" fill="#111">300</text>
<text x="621.3" y="1049.2" font-family="Liberation Sans" font-weight="bold" font-size="9.2" fill="#111">200</text>
<text x="1031" y="1049.2" font-family="Liberation Sans" font-weight="bold" font-size="9.2" fill="#111">200</text>
<text x="621.3" y="1069.8" font-family="Liberation Sans" font-weight="bold" font-size="9.2" fill="#111">100</text>
<text x="1031" y="1069.8" font-family="Liberation Sans" font-weight="bold" font-size="9.2" fill="#111">100</text>
<text x="620.5" y="1080" font-family="Liberation Sans" font-weight="bold" font-size="9.2" fill="#111">[um]</text>
<text x="1029.5" y="1080" font-family="Liberation Sans" font-weight="bold" font-size="9.2" fill="#111">[um]</text>
<circle cx="692.5" cy="1030.2" r="51" fill="#fff" stroke="#555" stroke-width="0.7"/><line x1="734.1" y1="1035.7" x2="743.1" y2="1036.9" stroke="#777" stroke-width="0.5"/><line x1="731.3" y1="1046.3" x2="739.6" y2="1049.7" stroke="#777" stroke-width="0.5"/><line x1="725.8" y1="1055.8" x2="733.0" y2="1061.2" stroke="#777" stroke-width="0.5"/><line x1="718.1" y1="1063.5" x2="723.5" y2="1070.7" stroke="#777" stroke-width="0.5"/><line x1="708.6" y1="1069.0" x2="712.0" y2="1077.3" stroke="#777" stroke-width="0.5"/><line x1="698.0" y1="1071.8" x2="699.2" y2="1080.8" stroke="#777" stroke-width="0.5"/><line x1="687.0" y1="1071.8" x2="685.8" y2="1080.8" stroke="#777" stroke-width="0.5"/><line x1="676.4" y1="1069.0" x2="673.0" y2="1077.3" stroke="#777" stroke-width="0.5"/><line x1="666.9" y1="1063.5" x2="661.5" y2="1070.7" stroke="#777" stroke-width="0.5"/><line x1="659.2" y1="1055.8" x2="652.0" y2="1061.2" stroke="#777" stroke-width="0.5"/><line x1="653.7" y1="1046.3" x2="645.4" y2="1049.7" stroke="#777" stroke-width="0.5"/><line x1="650.9" y1="1035.7" x2="641.9" y2="1036.9" stroke="#777" stroke-width="0.5"/><line x1="650.9" y1="1024.7" x2="641.9" y2="1023.5" stroke="#777" stroke-width="0.5"/><line x1="653.7" y1="1014.1" x2="645.4" y2="1010.7" stroke="#777" stroke-width="0.5"/><line x1="659.2" y1="1004.6" x2="652.0" y2="999.2" stroke="#777" stroke-width="0.5"/><line x1="666.9" y1="996.9" x2="661.5" y2="989.7" stroke="#777" stroke-width="0.5"/><line x1="676.4" y1="991.4" x2="673.0" y2="983.1" stroke="#777" stroke-width="0.5"/><line x1="687.0" y1="988.6" x2="685.8" y2="979.6" stroke="#777" stroke-width="0.5"/><line x1="698.0" y1="988.6" x2="699.2" y2="979.6" stroke="#777" stroke-width="0.5"/><line x1="708.6" y1="991.4" x2="712.0" y2="983.1" stroke="#777" stroke-width="0.5"/><line x1="718.1" y1="996.9" x2="723.5" y2="989.7" stroke="#777" stroke-width="0.5"/><line x1="725.8" y1="1004.6" x2="733.0" y2="999.2" stroke="#777" stroke-width="0.5"/><line x1="731.3" y1="1014.1" x2="739.6" y2="1010.7" stroke="#777" stroke-width="0.5"/><line x1="734.1" y1="1024.7" x2="743.1" y2="1023.5" stroke="#777" stroke-width="0.5"/><text x="692.5" y="985.2" font-family="Liberation Sans" font-weight="bold" font-size="4.2" fill="#333" text-anchor="middle">285</text><text x="704.5" y="986.8" font-family="Liberation Sans" font-weight="bold" font-size="4.2" fill="#333" text-anchor="middle">287</text><text x="715.8" y="991.4" font-family="Liberation Sans" font-weight="bold" font-size="4.2" fill="#333" text-anchor="middle">304</text><text x="725.4" y="998.8" font-family="Liberation Sans" font-weight="bold" font-size="4.2" fill="#333" text-anchor="middle">309</text><text x="732.8" y="1008.5" font-family="Liberation Sans" font-weight="bold" font-size="4.2" fill="#333" text-anchor="middle">312</text><text x="737.4" y="1019.7" font-family="Liberation Sans" font-weight="bold" font-size="4.2" fill="#333" text-anchor="middle">316</text><text x="739.0" y="1031.7" font-family="Liberation Sans" font-weight="bold" font-size="4.2" fill="#333" text-anchor="middle">311</text><text x="737.4" y="1043.7" font-family="Liberation Sans" font-weight="bold" font-size="4.2" fill="#333" text-anchor="middle">308</text><text x="732.8" y="1055.0" font-family="Liberation Sans" font-weight="bold" font-size="4.2" fill="#333" text-anchor="middle">365</text><text x="725.4" y="1064.6" font-family="Liberation Sans" font-weight="bold" font-size="4.2" fill="#333" text-anchor="middle">300</text><text x="715.8" y="1072.0" font-family="Liberation Sans" font-weight="bold" font-size="4.2" fill="#333" text-anchor="middle">286</text><text x="704.5" y="1076.6" font-family="Liberation Sans" font-weight="bold" font-size="4.2" fill="#333" text-anchor="middle">262</text><text x="692.5" y="1078.2" font-family="Liberation Sans" font-weight="bold" font-size="4.2" fill="#333" text-anchor="middle">262</text><text x="680.5" y="1076.6" font-family="Liberation Sans" font-weight="bold" font-size="4.2" fill="#333" text-anchor="middle">240</text><text x="669.2" y="1072.0" font-family="Liberation Sans" font-weight="bold" font-size="4.2" fill="#333" text-anchor="middle">258</text><text x="659.6" y="1064.6" font-family="Liberation Sans" font-weight="bold" font-size="4.2" fill="#333" text-anchor="middle">279</text><text x="652.2" y="1055.0" font-family="Liberation Sans" font-weight="bold" font-size="4.2" fill="#333" text-anchor="middle">277</text><text x="647.6" y="1043.7" font-family="Liberation Sans" font-weight="bold" font-size="4.2" fill="#333" text-anchor="middle">273</text><text x="646.0" y="1031.7" font-family="Liberation Sans" font-weight="bold" font-size="4.2" fill="#333" text-anchor="middle">274</text><text x="647.6" y="1019.7" font-family="Liberation Sans" font-weight="bold" font-size="4.2" fill="#333" text-anchor="middle">277</text><text x="652.2" y="1008.5" font-family="Liberation Sans" font-weight="bold" font-size="4.2" fill="#333" text-anchor="middle">279</text><text x="659.6" y="998.8" font-family="Liberation Sans" font-weight="bold" font-size="4.2" fill="#333" text-anchor="middle">283</text><text x="669.2" y="991.4" font-family="Liberation Sans" font-weight="bold" font-size="4.2" fill="#333" text-anchor="middle">280</text><text x="680.5" y="986.8" font-family="Liberation Sans" font-weight="bold" font-size="4.2" fill="#333" text-anchor="middle">281</text><circle cx="692.5" cy="1030.2" r="42" fill="url(#tmLx)"/><line x1="650.5" y1="1030.2" x2="734.5" y2="1030.2" stroke="#c06040" stroke-width="0.8" opacity="0.7"/><circle cx="692.5" cy="1030.2" r="14" fill="none" stroke="#fff" stroke-width="0.6" stroke-dasharray="2,1.5" opacity="0.85"/><circle cx="692.5" cy="1030.2" r="28" fill="none" stroke="#fff" stroke-width="0.6" stroke-dasharray="2,1.5" opacity="0.85"/><line x1="650.5" y1="1030.2" x2="734.5" y2="1030.2" stroke="#fff" stroke-width="0.5" stroke-dasharray="2,1.5" opacity="0.8"/><line x1="651.9" y1="1019.3" x2="733.1" y2="1041.1" stroke="#fff" stroke-width="0.5" stroke-dasharray="2,1.5" opacity="0.8"/><line x1="656.1" y1="1009.2" x2="728.9" y2="1051.2" stroke="#fff" stroke-width="0.5" stroke-dasharray="2,1.5" opacity="0.8"/><line x1="662.8" y1="1000.5" x2="722.2" y2="1059.9" stroke="#fff" stroke-width="0.5" stroke-dasharray="2,1.5" opacity="0.8"/><line x1="671.5" y1="993.8" x2="713.5" y2="1066.6" stroke="#fff" stroke-width="0.5" stroke-dasharray="2,1.5" opacity="0.8"/><line x1="681.6" y1="989.6" x2="703.4" y2="1070.8" stroke="#fff" stroke-width="0.5" stroke-dasharray="2,1.5" opacity="0.8"/><line x1="692.5" y1="988.2" x2="692.5" y2="1072.2" stroke="#fff" stroke-width="0.5" stroke-dasharray="2,1.5" opacity="0.8"/><line x1="703.4" y1="989.6" x2="681.6" y2="1070.8" stroke="#fff" stroke-width="0.5" stroke-dasharray="2,1.5" opacity="0.8"/><line x1="713.5" y1="993.8" x2="671.5" y2="1066.6" stroke="#fff" stroke-width="0.5" stroke-dasharray="2,1.5" opacity="0.8"/><line x1="722.2" y1="1000.5" x2="662.8" y2="1059.9" stroke="#fff" stroke-width="0.5" stroke-dasharray="2,1.5" opacity="0.8"/><line x1="728.9" y1="1009.2" x2="656.1" y2="1051.2" stroke="#fff" stroke-width="0.5" stroke-dasharray="2,1.5" opacity="0.8"/><line x1="733.1" y1="1019.3" x2="651.9" y2="1041.1" stroke="#fff" stroke-width="0.5" stroke-dasharray="2,1.5" opacity="0.8"/><circle cx="692.5" cy="1030.2" r="5.5" fill="#44aaee" opacity="0.8"/><path d="M689.5,1027.2 L695.5,1033.2 M695.5,1027.2 L689.5,1033.2" stroke="#e0902a" stroke-width="1.6"/><rect x="724.5" y="981.2" width="4.5" height="5" fill="#e0a030"/><text x="730.0" y="986.9000000000001" font-family="Liberation Sans" font-weight="bold" font-size="9.2" fill="#111">214</text>
<path d="M691.8,1019 L693.2,1019 L695,1045 L690,1045 Z" fill="#2040d0" opacity="0.8"/><path d="M689,1027 L696,1027 M689.5,1036 L695.5,1036" stroke="#fff" stroke-width="0.8"/>
<path d="M665,1061 Q676,1067 685,1068" stroke="#2020a0" stroke-width="3" fill="none" opacity="0.8"/>
<path d="M657,1037 Q660,1055 683,1064" stroke="#1040a0" stroke-width="0.9" fill="none" stroke-dasharray="2,1" opacity="0.7"/>
<circle cx="979.4" cy="1030.7" r="51" fill="#fff" stroke="#555" stroke-width="0.7"/><line x1="1021.0" y1="1036.2" x2="1030.0" y2="1037.4" stroke="#777" stroke-width="0.5"/><line x1="1018.2" y1="1046.8" x2="1026.5" y2="1050.2" stroke="#777" stroke-width="0.5"/><line x1="1012.7" y1="1056.3" x2="1019.9" y2="1061.7" stroke="#777" stroke-width="0.5"/><line x1="1005.0" y1="1064.0" x2="1010.4" y2="1071.2" stroke="#777" stroke-width="0.5"/><line x1="995.5" y1="1069.5" x2="998.9" y2="1077.8" stroke="#777" stroke-width="0.5"/><line x1="984.9" y1="1072.3" x2="986.1" y2="1081.3" stroke="#777" stroke-width="0.5"/><line x1="973.9" y1="1072.3" x2="972.7" y2="1081.3" stroke="#777" stroke-width="0.5"/><line x1="963.3" y1="1069.5" x2="959.9" y2="1077.8" stroke="#777" stroke-width="0.5"/><line x1="953.8" y1="1064.0" x2="948.4" y2="1071.2" stroke="#777" stroke-width="0.5"/><line x1="946.1" y1="1056.3" x2="938.9" y2="1061.7" stroke="#777" stroke-width="0.5"/><line x1="940.6" y1="1046.8" x2="932.3" y2="1050.2" stroke="#777" stroke-width="0.5"/><line x1="937.8" y1="1036.2" x2="928.8" y2="1037.4" stroke="#777" stroke-width="0.5"/><line x1="937.8" y1="1025.2" x2="928.8" y2="1024.0" stroke="#777" stroke-width="0.5"/><line x1="940.6" y1="1014.6" x2="932.3" y2="1011.2" stroke="#777" stroke-width="0.5"/><line x1="946.1" y1="1005.1" x2="938.9" y2="999.7" stroke="#777" stroke-width="0.5"/><line x1="953.8" y1="997.4" x2="948.4" y2="990.2" stroke="#777" stroke-width="0.5"/><line x1="963.3" y1="991.9" x2="959.9" y2="983.6" stroke="#777" stroke-width="0.5"/><line x1="973.9" y1="989.1" x2="972.7" y2="980.1" stroke="#777" stroke-width="0.5"/><line x1="984.9" y1="989.1" x2="986.1" y2="980.1" stroke="#777" stroke-width="0.5"/><line x1="995.5" y1="991.9" x2="998.9" y2="983.6" stroke="#777" stroke-width="0.5"/><line x1="1005.0" y1="997.4" x2="1010.4" y2="990.2" stroke="#777" stroke-width="0.5"/><line x1="1012.7" y1="1005.1" x2="1019.9" y2="999.7" stroke="#777" stroke-width="0.5"/><line x1="1018.2" y1="1014.6" x2="1026.5" y2="1011.2" stroke="#777" stroke-width="0.5"/><line x1="1021.0" y1="1025.2" x2="1030.0" y2="1024.0" stroke="#777" stroke-width="0.5"/><text x="979.4" y="985.7" font-family="Liberation Sans" font-weight="bold" font-size="4.2" fill="#333" text-anchor="middle">294</text><text x="991.4" y="987.3" font-family="Liberation Sans" font-weight="bold" font-size="4.2" fill="#333" text-anchor="middle">282</text><text x="1002.6" y="991.9" font-family="Liberation Sans" font-weight="bold" font-size="4.2" fill="#333" text-anchor="middle">287</text><text x="1012.3" y="999.3" font-family="Liberation Sans" font-weight="bold" font-size="4.2" fill="#333" text-anchor="middle">284</text><text x="1019.7" y="1009.0" font-family="Liberation Sans" font-weight="bold" font-size="4.2" fill="#333" text-anchor="middle">277</text><text x="1024.3" y="1020.2" font-family="Liberation Sans" font-weight="bold" font-size="4.2" fill="#333" text-anchor="middle">284</text><text x="1025.9" y="1032.2" font-family="Liberation Sans" font-weight="bold" font-size="4.2" fill="#333" text-anchor="middle">271</text><text x="1024.3" y="1044.2" font-family="Liberation Sans" font-weight="bold" font-size="4.2" fill="#333" text-anchor="middle">281</text><text x="1019.7" y="1055.5" font-family="Liberation Sans" font-weight="bold" font-size="4.2" fill="#333" text-anchor="middle">283</text><text x="1012.3" y="1065.1" font-family="Liberation Sans" font-weight="bold" font-size="4.2" fill="#333" text-anchor="middle">289</text><text x="1002.6" y="1072.5" font-family="Liberation Sans" font-weight="bold" font-size="4.2" fill="#333" text-anchor="middle">283</text><text x="991.4" y="1077.1" font-family="Liberation Sans" font-weight="bold" font-size="4.2" fill="#333" text-anchor="middle">252</text><text x="979.4" y="1078.7" font-family="Liberation Sans" font-weight="bold" font-size="4.2" fill="#333" text-anchor="middle">256</text><text x="967.4" y="1077.1" font-family="Liberation Sans" font-weight="bold" font-size="4.2" fill="#333" text-anchor="middle">283</text><text x="956.1" y="1072.5" font-family="Liberation Sans" font-weight="bold" font-size="4.2" fill="#333" text-anchor="middle">298</text><text x="946.5" y="1065.1" font-family="Liberation Sans" font-weight="bold" font-size="4.2" fill="#333" text-anchor="middle">287</text><text x="939.1" y="1055.5" font-family="Liberation Sans" font-weight="bold" font-size="4.2" fill="#333" text-anchor="middle">306</text><text x="934.5" y="1044.2" font-family="Liberation Sans" font-weight="bold" font-size="4.2" fill="#333" text-anchor="middle">290</text><text x="932.9" y="1032.2" font-family="Liberation Sans" font-weight="bold" font-size="4.2" fill="#333" text-anchor="middle">313</text><text x="934.5" y="1020.2" font-family="Liberation Sans" font-weight="bold" font-size="4.2" fill="#333" text-anchor="middle">312</text><text x="939.1" y="1009.0" font-family="Liberation Sans" font-weight="bold" font-size="4.2" fill="#333" text-anchor="middle">313</text><text x="946.5" y="999.3" font-family="Liberation Sans" font-weight="bold" font-size="4.2" fill="#333" text-anchor="middle">305</text><text x="956.1" y="991.9" font-family="Liberation Sans" font-weight="bold" font-size="4.2" fill="#333" text-anchor="middle">301</text><text x="967.4" y="987.3" font-family="Liberation Sans" font-weight="bold" font-size="4.2" fill="#333" text-anchor="middle">297</text><circle cx="979.4" cy="1030.7" r="42" fill="url(#tmRx)"/><line x1="937.4" y1="1030.7" x2="1021.4" y2="1030.7" stroke="#c06040" stroke-width="0.8" opacity="0.7"/><circle cx="979.4" cy="1030.7" r="14" fill="none" stroke="#fff" stroke-width="0.6" stroke-dasharray="2,1.5" opacity="0.85"/><circle cx="979.4" cy="1030.7" r="28" fill="none" stroke="#fff" stroke-width="0.6" stroke-dasharray="2,1.5" opacity="0.85"/><line x1="937.4" y1="1030.7" x2="1021.4" y2="1030.7" stroke="#fff" stroke-width="0.5" stroke-dasharray="2,1.5" opacity="0.8"/><line x1="938.8" y1="1019.8" x2="1020.0" y2="1041.6" stroke="#fff" stroke-width="0.5" stroke-dasharray="2,1.5" opacity="0.8"/><line x1="943.0" y1="1009.7" x2="1015.8" y2="1051.7" stroke="#fff" stroke-width="0.5" stroke-dasharray="2,1.5" opacity="0.8"/><line x1="949.7" y1="1001.0" x2="1009.1" y2="1060.4" stroke="#fff" stroke-width="0.5" stroke-dasharray="2,1.5" opacity="0.8"/><line x1="958.4" y1="994.3" x2="1000.4" y2="1067.1" stroke="#fff" stroke-width="0.5" stroke-dasharray="2,1.5" opacity="0.8"/><line x1="968.5" y1="990.1" x2="990.3" y2="1071.3" stroke="#fff" stroke-width="0.5" stroke-dasharray="2,1.5" opacity="0.8"/><line x1="979.4" y1="988.7" x2="979.4" y2="1072.7" stroke="#fff" stroke-width="0.5" stroke-dasharray="2,1.5" opacity="0.8"/><line x1="990.3" y1="990.1" x2="968.5" y2="1071.3" stroke="#fff" stroke-width="0.5" stroke-dasharray="2,1.5" opacity="0.8"/><line x1="1000.4" y1="994.3" x2="958.4" y2="1067.1" stroke="#fff" stroke-width="0.5" stroke-dasharray="2,1.5" opacity="0.8"/><line x1="1009.1" y1="1001.0" x2="949.7" y2="1060.4" stroke="#fff" stroke-width="0.5" stroke-dasharray="2,1.5" opacity="0.8"/><line x1="1015.8" y1="1009.7" x2="943.0" y2="1051.7" stroke="#fff" stroke-width="0.5" stroke-dasharray="2,1.5" opacity="0.8"/><line x1="1020.0" y1="1019.8" x2="938.8" y2="1041.6" stroke="#fff" stroke-width="0.5" stroke-dasharray="2,1.5" opacity="0.8"/><circle cx="979.4" cy="1030.7" r="5.5" fill="#44aaee" opacity="0.8"/><path d="M976.4,1027.7 L982.4,1033.7 M982.4,1027.7 L976.4,1033.7" stroke="#e0902a" stroke-width="1.6"/><rect x="1011" y="981.7" width="4.5" height="5" fill="#e0a030"/><text x="1016.5" y="987.4000000000001" font-family="Liberation Sans" font-weight="bold" font-size="9.2" fill="#111">223</text>
<rect x="752" y="979.3" width="168.2" height="81.4" fill="#000"/>
<line x1="765.5" y1="987.5" x2="910.2" y2="987.5" stroke="#3a3a3a" stroke-width="0.7"/>
<line x1="765.5" y1="1000.6" x2="910.2" y2="1000.6" stroke="#3a3a3a" stroke-width="0.7"/>
<line x1="765.5" y1="1013.7" x2="910.2" y2="1013.7" stroke="#3a3a3a" stroke-width="0.7"/>
<line x1="765.5" y1="1026.8" x2="910.2" y2="1026.8" stroke="#3a3a3a" stroke-width="0.7"/>
<line x1="765.5" y1="1039.9" x2="910.2" y2="1039.9" stroke="#3a3a3a" stroke-width="0.7"/>
<line x1="765.5" y1="1053.0" x2="910.2" y2="1053.0" stroke="#3a3a3a" stroke-width="0.7"/>
<line x1="765.5" y1="987.5" x2="765.5" y2="1053" stroke="#3a3a3a" stroke-width="0.7"/>
<line x1="789.6" y1="987.5" x2="789.6" y2="1053" stroke="#3a3a3a" stroke-width="0.7"/>
<line x1="813.7" y1="987.5" x2="813.7" y2="1053" stroke="#3a3a3a" stroke-width="0.7"/>
<line x1="837.9" y1="987.5" x2="837.9" y2="1053" stroke="#3a3a3a" stroke-width="0.7"/>
<line x1="862.0" y1="987.5" x2="862.0" y2="1053" stroke="#3a3a3a" stroke-width="0.7"/>
<line x1="886.1" y1="987.5" x2="886.1" y2="1053" stroke="#3a3a3a" stroke-width="0.7"/>
<line x1="910.2" y1="987.5" x2="910.2" y2="1053" stroke="#3a3a3a" stroke-width="0.7"/>
<text x="757" y="989.2" font-family="Liberation Sans" font-weight="bold" font-size="4.2" fill="#40d040">500</text>
<text x="757" y="1002.3" font-family="Liberation Sans" font-weight="bold" font-size="4.2" fill="#40d040">400</text>
<text x="757" y="1015.4" font-family="Liberation Sans" font-weight="bold" font-size="4.2" fill="#40d040">300</text>
<text x="757" y="1028.5" font-family="Liberation Sans" font-weight="bold" font-size="4.2" fill="#40d040">200</text>
<text x="757" y="1041.6" font-family="Liberation Sans" font-weight="bold" font-size="4.2" fill="#40d040">100</text>
<text x="755" y="1058" font-family="Liberation Sans" font-weight="bold" font-size="4.2" fill="#40d040">[um]</text>
<text x="789.6" y="1058" font-family="Liberation Sans" font-weight="bold" font-size="4.2" fill="#40d040" text-anchor="middle">1000</text>
<text x="813.7" y="1058" font-family="Liberation Sans" font-weight="bold" font-size="4.2" fill="#40d040" text-anchor="middle">2000</text>
<text x="837.8" y="1058" font-family="Liberation Sans" font-weight="bold" font-size="4.2" fill="#40d040" text-anchor="middle">3000</text>
<text x="862.0" y="1058" font-family="Liberation Sans" font-weight="bold" font-size="4.2" fill="#40d040" text-anchor="middle">4000</text>
<text x="886.1" y="1058" font-family="Liberation Sans" font-weight="bold" font-size="4.2" fill="#40d040" text-anchor="middle">5000</text>
<text x="910.2" y="1058" font-family="Liberation Sans" font-weight="bold" font-size="4.2" fill="#40d040" text-anchor="middle">6000</text>
<path d="M765.5,1053 L765.5,1020" stroke="#d040d0" stroke-width="1"/>
<path d="M765.5,1020.3 L770.0,1019.0 L775.0,1018.5 L780.0,1017.5 L788.0,1016.5 L795.0,1014.0 L802.0,1012.0 L809.5,1010.8 L815.0,1011.0 L820.0,1013.5 L827.0,1018.0 L832.0,1022.0 L837.6,1024.8 L844.0,1023.5 L850.5,1020.3 L856.0,1014.0 L862.2,1009.0 L868.0,1007.5 L873.9,1007.8 L885.0,1009.5 L897.3,1012.1 L904.0,1013.5 L909.7,1014.5" fill="none" stroke="#d040d0" stroke-width="1"/>
<path d="M765.5,1019.7 L766.8,1020.0 L768.1,1019.3 L769.4,1019.4 L770.7,1019.2 L772.0,1017.8 L773.3,1017.6 L774.6,1019.3 L775.9,1017.8 L777.2,1017.5 L778.5,1018.9 L779.8,1017.5 L781.1,1018.1 L782.4,1017.1 L783.7,1017.3 L785.0,1016.1 L786.3,1017.0 L787.6,1017.4 L788.9,1016.2 L790.2,1016.2 L791.5,1015.6 L792.8,1013.8 L794.1,1014.9 L795.4,1014.1 L796.7,1013.1 L798.0,1012.1 L799.3,1013.6 L800.6,1012.3 L801.9,1012.5 L803.2,1012.6 L804.5,1012.1 L805.8,1012.3 L807.1,1011.0 L808.4,1011.6 L809.7,1010.7 L811.0,1011.8 L812.3,1011.7 L813.6,1010.1 L814.9,1010.2 L816.2,1011.0 L817.5,1013.3 L818.8,1012.8 L820.1,1013.8 L821.4,1014.0 L822.7,1015.3 L824.0,1015.8 L825.3,1016.6 L826.6,1017.9 L827.9,1018.9 L829.2,1020.6 L830.5,1021.2 L831.8,1022.8 L833.1,1023.3 L834.4,1024.3 L835.7,1024.2 L837.0,1023.8 L838.3,1025.5 L839.6,1025.4 L840.9,1025.0 L842.2,1024.0 L843.5,1024.1 L844.8,1022.5 L846.1,1023.2 L847.4,1022.0 L848.7,1020.7 L850.0,1019.6 L851.3,1020.2 L852.6,1019.0 L853.9,1015.5 L855.2,1015.6 L856.5,1013.4 L857.8,1011.8 L859.1,1011.0 L860.4,1011.0 L861.7,1010.2 L863.0,1007.8 L864.3,1008.7 L865.6,1007.1 L866.9,1008.3 L868.2,1007.1 L869.5,1008.4 L870.8,1008.7 L872.1,1007.7 L873.4,1008.9 L874.7,1007.5 L876.0,1007.2 L877.3,1008.5 L878.6,1007.5 L879.9,1008.1 L881.2,1008.7 L882.5,1009.4 L883.8,1008.6 L885.1,1008.5 L886.4,1010.6 L887.7,1009.7 L889.0,1011.4 L890.3,1011.5 L891.6,1010.6 L892.9,1011.1 L894.2,1011.5 L895.5,1012.0 L896.8,1012.2 L898.1,1012.4 L899.4,1012.8 L900.7,1013.8 L902.0,1013.1 L903.3,1013.2 L904.6,1014.1 L905.9,1013.3 L907.2,1013.6 L908.5,1015.3" fill="none" stroke="#50d8e8" stroke-width="0.9"/>
<path d="M789,1016 L789.5,1045 L790.5,1045 L791,1016 M799.5,1013.5 L800,1021 L801,1021 L801.5,1013 M811,1011 L811.5,1020 L812.5,1020 L813,1010.5 M817,1011 L818,1018 M820,1013 L821,1019" fill="none" stroke="#40c8d8" stroke-width="1"/>
<rect x="603" y="1084.3" width="218" height="88" fill="#181818"/><path d="M603,1139 C668.4,1139 690.2,1147 712.0,1147 C733.8,1147 755.6,1131.4 821,1131.4 L821,1172.3 L603,1172.3 Z" fill="#303030"/><path d="M603,1148.3 Q712.0,1166.45 821,1144.8 L821,1172.3 L603,1172.3 Z" fill="#555"/><path d="M603,1157.3 Q712.0,1175.45 821,1153.8 L821,1172.3 L603,1172.3 Z" fill="#3a3a3a"/><path d="M603,1139 C668.4,1139 690.2,1147 712.0,1147 C733.8,1147 755.6,1131.4 821,1131.4" fill="none" stroke="#8a8a8a" stroke-width="1" opacity="0.8"/><path d="M603,1148.3 Q712.0,1166.45 821,1144.8" fill="none" stroke="#e4e4e4" stroke-width="2.2" opacity="0.95" filter="url(#bl1)"/><path d="M603,1152.3 Q712.0,1170.45 821,1148.8" fill="none" stroke="#8a8a8a" stroke-width="3" opacity="0.6" filter="url(#bl1)"/><rect x="603" y="1084.3" width="218" height="88" fill="#fff" filter="url(#noise)" opacity="0.16"/><line x1="711.3" y1="1084.3" x2="711.3" y2="1172.3" stroke="#a0a020" stroke-width="0.8"/><text x="604" y="1089.8" font-family="Liberation Sans" font-weight="bold" font-size="4.7"><tspan fill="#c8c8ff">Tracing HD ( 1/10 )</tspan><tspan fill="#ffd080"> Ultra Fine</tspan><tspan fill="#f0f080"> Retinal</tspan><tspan fill="#eee"> Intensity +6</tspan></text>
<rect x="850.5" y="1083.6" width="218.5" height="89" fill="#181818"/><path d="M850.5,1128.4 C916.05,1128.4 937.9,1143.6 959.75,1143.6 C981.6,1143.6 1003.45,1139 1069.0,1139 L1069.0,1172.6 L850.5,1172.6 Z" fill="#303030"/><path d="M850.5,1141.3 Q959.75,1163.6000000000001 1069.0,1148.3 L1069.0,1172.6 L850.5,1172.6 Z" fill="#555"/><path d="M850.5,1150.3 Q959.75,1172.6000000000001 1069.0,1157.3 L1069.0,1172.6 L850.5,1172.6 Z" fill="#3a3a3a"/><path d="M850.5,1128.4 C916.05,1128.4 937.9,1143.6 959.75,1143.6 C981.6,1143.6 1003.45,1139 1069.0,1139" fill="none" stroke="#8a8a8a" stroke-width="1" opacity="0.8"/><path d="M850.5,1141.3 Q959.75,1163.6000000000001 1069.0,1148.3" fill="none" stroke="#e4e4e4" stroke-width="2.2" opacity="0.95" filter="url(#bl1)"/><path d="M850.5,1145.3 Q959.75,1167.6000000000001 1069.0,1152.3" fill="none" stroke="#8a8a8a" stroke-width="3" opacity="0.6" filter="url(#bl1)"/><rect x="850.5" y="1083.6" width="218.5" height="89" fill="#fff" filter="url(#noise)" opacity="0.16"/><line x1="959.1" y1="1083.6" x2="959.1" y2="1172.6" stroke="#a0a020" stroke-width="0.8"/><text x="851.5" y="1089.1" font-family="Liberation Sans" font-weight="bold" font-size="4.7"><tspan fill="#c8c8ff">Tracing HD ( 1/10 )</tspan><tspan fill="#ffd080"> Ultra Fine</tspan><tspan fill="#f0f080"> Retinal</tspan><tspan fill="#eee"> Intensity +6</tspan></text>
<rect x="475.2" y="1084.3" width="54.1" height="26.5" fill="#131313"/><path d="M475.2,1102.85 Q502.25,1107.09 529.3,1102.32 L529.3,1110.8 L475.2,1110.8 Z" fill="#1c1c1c"/><path d="M475.2,1102.85 Q502.25,1107.09 529.3,1102.32" fill="none" stroke="#c8c8c8" stroke-width="1" opacity="0.85"/><path d="M475.2,1099.6699999999998 Q502.25,1103.9099999999999 529.3,1098.875" fill="none" stroke="#888" stroke-width="0.7" opacity="0.6"/><circle cx="522.2669999999999" cy="1104.44" r="6" fill="#30c030" opacity="0.35" filter="url(#bl2)"/><line x1="515.8" y1="1104.4" x2="528.8" y2="1104.4" stroke="#30c030" stroke-width="0.5" opacity="0.7"/><line x1="516.0" y1="1102.8" x2="528.5" y2="1106.1" stroke="#30c030" stroke-width="0.5" opacity="0.7"/><line x1="516.6" y1="1101.2" x2="527.9" y2="1107.7" stroke="#30c030" stroke-width="0.5" opacity="0.7"/><line x1="517.7" y1="1099.8" x2="526.9" y2="1109.0" stroke="#30c030" stroke-width="0.5" opacity="0.7"/><line x1="519.0" y1="1098.8" x2="525.5" y2="1110.1" stroke="#30c030" stroke-width="0.5" opacity="0.7"/><line x1="520.6" y1="1098.2" x2="523.9" y2="1110.7" stroke="#30c030" stroke-width="0.5" opacity="0.7"/><line x1="522.3" y1="1097.9" x2="522.3" y2="1110.9" stroke="#30c030" stroke-width="0.5" opacity="0.7"/><line x1="523.9" y1="1098.2" x2="520.6" y2="1110.7" stroke="#30c030" stroke-width="0.5" opacity="0.7"/><line x1="525.5" y1="1098.8" x2="519.0" y2="1110.1" stroke="#30c030" stroke-width="0.5" opacity="0.7"/><line x1="526.9" y1="1099.8" x2="517.7" y2="1109.0" stroke="#30c030" stroke-width="0.5" opacity="0.7"/><line x1="527.9" y1="1101.2" x2="516.6" y2="1107.7" stroke="#30c030" stroke-width="0.5" opacity="0.7"/><line x1="528.5" y1="1102.8" x2="516.0" y2="1106.1" stroke="#30c030" stroke-width="0.5" opacity="0.7"/><circle cx="522.2669999999999" cy="1104.44" r="1.8" fill="#50e050" opacity="0.7"/>
<rect x="532.3" y="1084.3" width="54.2" height="26.5" fill="#131313"/><path d="M532.3,1102.85 Q559.4,1107.09 586.5,1102.32 L586.5,1110.8 L532.3,1110.8 Z" fill="#1c1c1c"/><path d="M532.3,1102.85 Q559.4,1107.09 586.5,1102.32" fill="none" stroke="#c8c8c8" stroke-width="1" opacity="0.85"/><path d="M532.3,1099.6699999999998 Q559.4,1103.9099999999999 586.5,1098.875" fill="none" stroke="#888" stroke-width="0.7" opacity="0.6"/><circle cx="579.454" cy="1104.44" r="6" fill="#30c030" opacity="0.35" filter="url(#bl2)"/><line x1="573.0" y1="1104.4" x2="586.0" y2="1104.4" stroke="#30c030" stroke-width="0.5" opacity="0.7"/><line x1="573.2" y1="1102.8" x2="585.7" y2="1106.1" stroke="#30c030" stroke-width="0.5" opacity="0.7"/><line x1="573.8" y1="1101.2" x2="585.1" y2="1107.7" stroke="#30c030" stroke-width="0.5" opacity="0.7"/><line x1="574.9" y1="1099.8" x2="584.1" y2="1109.0" stroke="#30c030" stroke-width="0.5" opacity="0.7"/><line x1="576.2" y1="1098.8" x2="582.7" y2="1110.1" stroke="#30c030" stroke-width="0.5" opacity="0.7"/><line x1="577.8" y1="1098.2" x2="581.1" y2="1110.7" stroke="#30c030" stroke-width="0.5" opacity="0.7"/><line x1="579.5" y1="1097.9" x2="579.5" y2="1110.9" stroke="#30c030" stroke-width="0.5" opacity="0.7"/><line x1="581.1" y1="1098.2" x2="577.8" y2="1110.7" stroke="#30c030" stroke-width="0.5" opacity="0.7"/><line x1="582.7" y1="1098.8" x2="576.2" y2="1110.1" stroke="#30c030" stroke-width="0.5" opacity="0.7"/><line x1="584.1" y1="1099.8" x2="574.9" y2="1109.0" stroke="#30c030" stroke-width="0.5" opacity="0.7"/><line x1="585.1" y1="1101.2" x2="573.8" y2="1107.7" stroke="#30c030" stroke-width="0.5" opacity="0.7"/><line x1="585.7" y1="1102.8" x2="573.2" y2="1106.1" stroke="#30c030" stroke-width="0.5" opacity="0.7"/><circle cx="579.454" cy="1104.44" r="1.8" fill="#50e050" opacity="0.7"/><rect x="532.9" y="1084.8999999999999" width="53.0" height="25.3" fill="none" stroke="#a01818" stroke-width="1.2"/>
<rect x="475.2" y="1113.9" width="54.1" height="26.899999999999864" fill="#131313"/><path d="M475.2,1132.73 Q502.25,1137.0339999999999 529.3,1132.192 L529.3,1140.8 L475.2,1140.8 Z" fill="#1c1c1c"/><path d="M475.2,1132.73 Q502.25,1137.0339999999999 529.3,1132.192" fill="none" stroke="#c8c8c8" stroke-width="1" opacity="0.85"/><path d="M475.2,1129.502 Q502.25,1133.806 529.3,1128.695" fill="none" stroke="#888" stroke-width="0.7" opacity="0.6"/><circle cx="522.2669999999999" cy="1134.344" r="6" fill="#30c030" opacity="0.35" filter="url(#bl2)"/><line x1="515.8" y1="1134.3" x2="528.8" y2="1134.3" stroke="#30c030" stroke-width="0.5" opacity="0.7"/><line x1="516.0" y1="1132.7" x2="528.5" y2="1136.0" stroke="#30c030" stroke-width="0.5" opacity="0.7"/><line x1="516.6" y1="1131.1" x2="527.9" y2="1137.6" stroke="#30c030" stroke-width="0.5" opacity="0.7"/><line x1="517.7" y1="1129.7" x2="526.9" y2="1138.9" stroke="#30c030" stroke-width="0.5" opacity="0.7"/><line x1="519.0" y1="1128.7" x2="525.5" y2="1140.0" stroke="#30c030" stroke-width="0.5" opacity="0.7"/><line x1="520.6" y1="1128.1" x2="523.9" y2="1140.6" stroke="#30c030" stroke-width="0.5" opacity="0.7"/><line x1="522.3" y1="1127.8" x2="522.3" y2="1140.8" stroke="#30c030" stroke-width="0.5" opacity="0.7"/><line x1="523.9" y1="1128.1" x2="520.6" y2="1140.6" stroke="#30c030" stroke-width="0.5" opacity="0.7"/><line x1="525.5" y1="1128.7" x2="519.0" y2="1140.0" stroke="#30c030" stroke-width="0.5" opacity="0.7"/><line x1="526.9" y1="1129.7" x2="517.7" y2="1138.9" stroke="#30c030" stroke-width="0.5" opacity="0.7"/><line x1="527.9" y1="1131.1" x2="516.6" y2="1137.6" stroke="#30c030" stroke-width="0.5" opacity="0.7"/><line x1="528.5" y1="1132.7" x2="516.0" y2="1136.0" stroke="#30c030" stroke-width="0.5" opacity="0.7"/><circle cx="522.2669999999999" cy="1134.344" r="1.8" fill="#50e050" opacity="0.7"/>
<rect x="532.3" y="1113.9" width="54.2" height="26.899999999999864" fill="#131313"/><path d="M532.3,1132.73 Q559.4,1137.0339999999999 586.5,1132.192 L586.5,1140.8 L532.3,1140.8 Z" fill="#1c1c1c"/><path d="M532.3,1132.73 Q559.4,1137.0339999999999 586.5,1132.192" fill="none" stroke="#c8c8c8" stroke-width="1" opacity="0.85"/><path d="M532.3,1129.502 Q559.4,1133.806 586.5,1128.695" fill="none" stroke="#888" stroke-width="0.7" opacity="0.6"/><circle cx="579.454" cy="1134.344" r="6" fill="#30c030" opacity="0.35" filter="url(#bl2)"/><line x1="573.0" y1="1134.3" x2="586.0" y2="1134.3" stroke="#30c030" stroke-width="0.5" opacity="0.7"/><line x1="573.2" y1="1132.7" x2="585.7" y2="1136.0" stroke="#30c030" stroke-width="0.5" opacity="0.7"/><line x1="573.8" y1="1131.1" x2="585.1" y2="1137.6" stroke="#30c030" stroke-width="0.5" opacity="0.7"/><line x1="574.9" y1="1129.7" x2="584.1" y2="1138.9" stroke="#30c030" stroke-width="0.5" opacity="0.7"/><line x1="576.2" y1="1128.7" x2="582.7" y2="1140.0" stroke="#30c030" stroke-width="0.5" opacity="0.7"/><line x1="577.8" y1="1128.1" x2="581.1" y2="1140.6" stroke="#30c030" stroke-width="0.5" opacity="0.7"/><line x1="579.5" y1="1127.8" x2="579.5" y2="1140.8" stroke="#30c030" stroke-width="0.5" opacity="0.7"/><line x1="581.1" y1="1128.1" x2="577.8" y2="1140.6" stroke="#30c030" stroke-width="0.5" opacity="0.7"/><line x1="582.7" y1="1128.7" x2="576.2" y2="1140.0" stroke="#30c030" stroke-width="0.5" opacity="0.7"/><line x1="584.1" y1="1129.7" x2="574.9" y2="1138.9" stroke="#30c030" stroke-width="0.5" opacity="0.7"/><line x1="585.1" y1="1131.1" x2="573.8" y2="1137.6" stroke="#30c030" stroke-width="0.5" opacity="0.7"/><line x1="585.7" y1="1132.7" x2="573.2" y2="1136.0" stroke="#30c030" stroke-width="0.5" opacity="0.7"/><circle cx="579.454" cy="1134.344" r="1.8" fill="#50e050" opacity="0.7"/>
<rect x="475.2" y="1143.6" width="54.1" height="28.40000000000009" fill="#131313"/><path d="M475.2,1163.48 Q502.25,1168.024 529.3,1162.912 L529.3,1172.0 L475.2,1172.0 Z" fill="#1c1c1c"/><path d="M475.2,1163.48 Q502.25,1168.024 529.3,1162.912" fill="none" stroke="#c8c8c8" stroke-width="1" opacity="0.85"/><path d="M475.2,1160.072 Q502.25,1164.616 529.3,1159.22" fill="none" stroke="#888" stroke-width="0.7" opacity="0.6"/><circle cx="522.2669999999999" cy="1165.184" r="6" fill="#30c030" opacity="0.35" filter="url(#bl2)"/><line x1="515.8" y1="1165.2" x2="528.8" y2="1165.2" stroke="#30c030" stroke-width="0.5" opacity="0.7"/><line x1="516.0" y1="1163.5" x2="528.5" y2="1166.9" stroke="#30c030" stroke-width="0.5" opacity="0.7"/><line x1="516.6" y1="1161.9" x2="527.9" y2="1168.4" stroke="#30c030" stroke-width="0.5" opacity="0.7"/><line x1="517.7" y1="1160.6" x2="526.9" y2="1169.8" stroke="#30c030" stroke-width="0.5" opacity="0.7"/><line x1="519.0" y1="1159.6" x2="525.5" y2="1170.8" stroke="#30c030" stroke-width="0.5" opacity="0.7"/><line x1="520.6" y1="1158.9" x2="523.9" y2="1171.5" stroke="#30c030" stroke-width="0.5" opacity="0.7"/><line x1="522.3" y1="1158.7" x2="522.3" y2="1171.7" stroke="#30c030" stroke-width="0.5" opacity="0.7"/><line x1="523.9" y1="1158.9" x2="520.6" y2="1171.5" stroke="#30c030" stroke-width="0.5" opacity="0.7"/><line x1="525.5" y1="1159.6" x2="519.0" y2="1170.8" stroke="#30c030" stroke-width="0.5" opacity="0.7"/><line x1="526.9" y1="1160.6" x2="517.7" y2="1169.8" stroke="#30c030" stroke-width="0.5" opacity="0.7"/><line x1="527.9" y1="1161.9" x2="516.6" y2="1168.4" stroke="#30c030" stroke-width="0.5" opacity="0.7"/><line x1="528.5" y1="1163.5" x2="516.0" y2="1166.9" stroke="#30c030" stroke-width="0.5" opacity="0.7"/><circle cx="522.2669999999999" cy="1165.184" r="1.8" fill="#50e050" opacity="0.7"/>
<rect x="532.3" y="1143.6" width="54.2" height="28.40000000000009" fill="#131313"/><path d="M532.3,1163.48 Q559.4,1168.024 586.5,1162.912 L586.5,1172.0 L532.3,1172.0 Z" fill="#1c1c1c"/><path d="M532.3,1163.48 Q559.4,1168.024 586.5,1162.912" fill="none" stroke="#c8c8c8" stroke-width="1" opacity="0.85"/><path d="M532.3,1160.072 Q559.4,1164.616 586.5,1159.22" fill="none" stroke="#888" stroke-width="0.7" opacity="0.6"/><circle cx="579.454" cy="1165.184" r="6" fill="#30c030" opacity="0.35" filter="url(#bl2)"/><line x1="573.0" y1="1165.2" x2="586.0" y2="1165.2" stroke="#30c030" stroke-width="0.5" opacity="0.7"/><line x1="573.2" y1="1163.5" x2="585.7" y2="1166.9" stroke="#30c030" stroke-width="0.5" opacity="0.7"/><line x1="573.8" y1="1161.9" x2="585.1" y2="1168.4" stroke="#30c030" stroke-width="0.5" opacity="0.7"/><line x1="574.9" y1="1160.6" x2="584.1" y2="1169.8" stroke="#30c030" stroke-width="0.5" opacity="0.7"/><line x1="576.2" y1="1159.6" x2="582.7" y2="1170.8" stroke="#30c030" stroke-width="0.5" opacity="0.7"/><line x1="577.8" y1="1158.9" x2="581.1" y2="1171.5" stroke="#30c030" stroke-width="0.5" opacity="0.7"/><line x1="579.5" y1="1158.7" x2="579.5" y2="1171.7" stroke="#30c030" stroke-width="0.5" opacity="0.7"/><line x1="581.1" y1="1158.9" x2="577.8" y2="1171.5" stroke="#30c030" stroke-width="0.5" opacity="0.7"/><line x1="582.7" y1="1159.6" x2="576.2" y2="1170.8" stroke="#30c030" stroke-width="0.5" opacity="0.7"/><line x1="584.1" y1="1160.6" x2="574.9" y2="1169.8" stroke="#30c030" stroke-width="0.5" opacity="0.7"/><line x1="585.1" y1="1161.9" x2="573.8" y2="1168.4" stroke="#30c030" stroke-width="0.5" opacity="0.7"/><line x1="585.7" y1="1163.5" x2="573.2" y2="1166.9" stroke="#30c030" stroke-width="0.5" opacity="0.7"/><circle cx="579.454" cy="1165.184" r="1.8" fill="#50e050" opacity="0.7"/>
<rect x="1084.7" y="1084.3" width="54.1" height="26.5" fill="#131313"/><path d="M1084.7,1102.85 Q1111.75,1107.09 1138.8,1102.32 L1138.8,1110.8 L1084.7,1110.8 Z" fill="#1c1c1c"/><path d="M1084.7,1102.85 Q1111.75,1107.09 1138.8,1102.32" fill="none" stroke="#c8c8c8" stroke-width="1" opacity="0.85"/><path d="M1084.7,1099.6699999999998 Q1111.75,1103.9099999999999 1138.8,1098.875" fill="none" stroke="#888" stroke-width="0.7" opacity="0.6"/><circle cx="1131.767" cy="1104.44" r="6" fill="#30c030" opacity="0.35" filter="url(#bl2)"/><line x1="1125.3" y1="1104.4" x2="1138.3" y2="1104.4" stroke="#30c030" stroke-width="0.5" opacity="0.7"/><line x1="1125.5" y1="1102.8" x2="1138.0" y2="1106.1" stroke="#30c030" stroke-width="0.5" opacity="0.7"/><line x1="1126.1" y1="1101.2" x2="1137.4" y2="1107.7" stroke="#30c030" stroke-width="0.5" opacity="0.7"/><line x1="1127.2" y1="1099.8" x2="1136.4" y2="1109.0" stroke="#30c030" stroke-width="0.5" opacity="0.7"/><line x1="1128.5" y1="1098.8" x2="1135.0" y2="1110.1" stroke="#30c030" stroke-width="0.5" opacity="0.7"/><line x1="1130.1" y1="1098.2" x2="1133.4" y2="1110.7" stroke="#30c030" stroke-width="0.5" opacity="0.7"/><line x1="1131.8" y1="1097.9" x2="1131.8" y2="1110.9" stroke="#30c030" stroke-width="0.5" opacity="0.7"/><line x1="1133.4" y1="1098.2" x2="1130.1" y2="1110.7" stroke="#30c030" stroke-width="0.5" opacity="0.7"/><line x1="1135.0" y1="1098.8" x2="1128.5" y2="1110.1" stroke="#30c030" stroke-width="0.5" opacity="0.7"/><line x1="1136.4" y1="1099.8" x2="1127.2" y2="1109.0" stroke="#30c030" stroke-width="0.5" opacity="0.7"/><line x1="1137.4" y1="1101.2" x2="1126.1" y2="1107.7" stroke="#30c030" stroke-width="0.5" opacity="0.7"/><line x1="1138.0" y1="1102.8" x2="1125.5" y2="1106.1" stroke="#30c030" stroke-width="0.5" opacity="0.7"/><circle cx="1131.767" cy="1104.44" r="1.8" fill="#50e050" opacity="0.7"/><rect x="1085.3" y="1084.8999999999999" width="52.9" height="25.3" fill="none" stroke="#a01818" stroke-width="1.2"/>
<rect x="1142.2" y="1084.3" width="54.2" height="26.5" fill="#131313"/><path d="M1142.2,1102.85 Q1169.3,1107.09 1196.4,1102.32 L1196.4,1110.8 L1142.2,1110.8 Z" fill="#1c1c1c"/><path d="M1142.2,1102.85 Q1169.3,1107.09 1196.4,1102.32" fill="none" stroke="#c8c8c8" stroke-width="1" opacity="0.85"/><path d="M1142.2,1099.6699999999998 Q1169.3,1103.9099999999999 1196.4,1098.875" fill="none" stroke="#888" stroke-width="0.7" opacity="0.6"/><circle cx="1189.354" cy="1104.44" r="6" fill="#30c030" opacity="0.35" filter="url(#bl2)"/><line x1="1182.9" y1="1104.4" x2="1195.9" y2="1104.4" stroke="#30c030" stroke-width="0.5" opacity="0.7"/><line x1="1183.1" y1="1102.8" x2="1195.6" y2="1106.1" stroke="#30c030" stroke-width="0.5" opacity="0.7"/><line x1="1183.7" y1="1101.2" x2="1195.0" y2="1107.7" stroke="#30c030" stroke-width="0.5" opacity="0.7"/><line x1="1184.8" y1="1099.8" x2="1194.0" y2="1109.0" stroke="#30c030" stroke-width="0.5" opacity="0.7"/><line x1="1186.1" y1="1098.8" x2="1192.6" y2="1110.1" stroke="#30c030" stroke-width="0.5" opacity="0.7"/><line x1="1187.7" y1="1098.2" x2="1191.0" y2="1110.7" stroke="#30c030" stroke-width="0.5" opacity="0.7"/><line x1="1189.4" y1="1097.9" x2="1189.4" y2="1110.9" stroke="#30c030" stroke-width="0.5" opacity="0.7"/><line x1="1191.0" y1="1098.2" x2="1187.7" y2="1110.7" stroke="#30c030" stroke-width="0.5" opacity="0.7"/><line x1="1192.6" y1="1098.8" x2="1186.1" y2="1110.1" stroke="#30c030" stroke-width="0.5" opacity="0.7"/><line x1="1194.0" y1="1099.8" x2="1184.8" y2="1109.0" stroke="#30c030" stroke-width="0.5" opacity="0.7"/><line x1="1195.0" y1="1101.2" x2="1183.7" y2="1107.7" stroke="#30c030" stroke-width="0.5" opacity="0.7"/><line x1="1195.6" y1="1102.8" x2="1183.1" y2="1106.1" stroke="#30c030" stroke-width="0.5" opacity="0.7"/><circle cx="1189.354" cy="1104.44" r="1.8" fill="#50e050" opacity="0.7"/>
<rect x="1084.7" y="1113.9" width="54.1" height="26.899999999999864" fill="#131313"/><path d="M1084.7,1132.73 Q1111.75,1137.0339999999999 1138.8,1132.192 L1138.8,1140.8 L1084.7,1140.8 Z" fill="#1c1c1c"/><path d="M1084.7,1132.73 Q1111.75,1137.0339999999999 1138.8,1132.192" fill="none" stroke="#c8c8c8" stroke-width="1" opacity="0.85"/><path d="M1084.7,1129.502 Q1111.75,1133.806 1138.8,1128.695" fill="none" stroke="#888" stroke-width="0.7" opacity="0.6"/><circle cx="1131.767" cy="1134.344" r="6" fill="#30c030" opacity="0.35" filter="url(#bl2)"/><line x1="1125.3" y1="1134.3" x2="1138.3" y2="1134.3" stroke="#30c030" stroke-width="0.5" opacity="0.7"/><line x1="1125.5" y1="1132.7" x2="1138.0" y2="1136.0" stroke="#30c030" stroke-width="0.5" opacity="0.7"/><line x1="1126.1" y1="1131.1" x2="1137.4" y2="1137.6" stroke="#30c030" stroke-width="0.5" opacity="0.7"/><line x1="1127.2" y1="1129.7" x2="1136.4" y2="1138.9" stroke="#30c030" stroke-width="0.5" opacity="0.7"/><line x1="1128.5" y1="1128.7" x2="1135.0" y2="1140.0" stroke="#30c030" stroke-width="0.5" opacity="0.7"/><line x1="1130.1" y1="1128.1" x2="1133.4" y2="1140.6" stroke="#30c030" stroke-width="0.5" opacity="0.7"/><line x1="1131.8" y1="1127.8" x2="1131.8" y2="1140.8" stroke="#30c030" stroke-width="0.5" opacity="0.7"/><line x1="1133.4" y1="1128.1" x2="1130.1" y2="1140.6" stroke="#30c030" stroke-width="0.5" opacity="0.7"/><line x1="1135.0" y1="1128.7" x2="1128.5" y2="1140.0" stroke="#30c030" stroke-width="0.5" opacity="0.7"/><line x1="1136.4" y1="1129.7" x2="1127.2" y2="1138.9" stroke="#30c030" stroke-width="0.5" opacity="0.7"/><line x1="1137.4" y1="1131.1" x2="1126.1" y2="1137.6" stroke="#30c030" stroke-width="0.5" opacity="0.7"/><line x1="1138.0" y1="1132.7" x2="1125.5" y2="1136.0" stroke="#30c030" stroke-width="0.5" opacity="0.7"/><circle cx="1131.767" cy="1134.344" r="1.8" fill="#50e050" opacity="0.7"/>
<rect x="1142.2" y="1113.9" width="54.2" height="26.899999999999864" fill="#131313"/><path d="M1142.2,1132.73 Q1169.3,1137.0339999999999 1196.4,1132.192 L1196.4,1140.8 L1142.2,1140.8 Z" fill="#1c1c1c"/><path d="M1142.2,1132.73 Q1169.3,1137.0339999999999 1196.4,1132.192" fill="none" stroke="#c8c8c8" stroke-width="1" opacity="0.85"/><path d="M1142.2,1129.502 Q1169.3,1133.806 1196.4,1128.695" fill="none" stroke="#888" stroke-width="0.7" opacity="0.6"/><circle cx="1189.354" cy="1134.344" r="6" fill="#30c030" opacity="0.35" filter="url(#bl2)"/><line x1="1182.9" y1="1134.3" x2="1195.9" y2="1134.3" stroke="#30c030" stroke-width="0.5" opacity="0.7"/><line x1="1183.1" y1="1132.7" x2="1195.6" y2="1136.0" stroke="#30c030" stroke-width="0.5" opacity="0.7"/><line x1="1183.7" y1="1131.1" x2="1195.0" y2="1137.6" stroke="#30c030" stroke-width="0.5" opacity="0.7"/><line x1="1184.8" y1="1129.7" x2="1194.0" y2="1138.9" stroke="#30c030" stroke-width="0.5" opacity="0.7"/><line x1="1186.1" y1="1128.7" x2="1192.6" y2="1140.0" stroke="#30c030" stroke-width="0.5" opacity="0.7"/><line x1="1187.7" y1="1128.1" x2="1191.0" y2="1140.6" stroke="#30c030" stroke-width="0.5" opacity="0.7"/><line x1="1189.4" y1="1127.8" x2="1189.4" y2="1140.8" stroke="#30c030" stroke-width="0.5" opacity="0.7"/><line x1="1191.0" y1="1128.1" x2="1187.7" y2="1140.6" stroke="#30c030" stroke-width="0.5" opacity="0.7"/><line x1="1192.6" y1="1128.7" x2="1186.1" y2="1140.0" stroke="#30c030" stroke-width="0.5" opacity="0.7"/><line x1="1194.0" y1="1129.7" x2="1184.8" y2="1138.9" stroke="#30c030" stroke-width="0.5" opacity="0.7"/><line x1="1195.0" y1="1131.1" x2="1183.7" y2="1137.6" stroke="#30c030" stroke-width="0.5" opacity="0.7"/><line x1="1195.6" y1="1132.7" x2="1183.1" y2="1136.0" stroke="#30c030" stroke-width="0.5" opacity="0.7"/><circle cx="1189.354" cy="1134.344" r="1.8" fill="#50e050" opacity="0.7"/>
<rect x="1084.7" y="1143.6" width="54.1" height="28.40000000000009" fill="#131313"/><path d="M1084.7,1163.48 Q1111.75,1168.024 1138.8,1162.912 L1138.8,1172.0 L1084.7,1172.0 Z" fill="#1c1c1c"/><path d="M1084.7,1163.48 Q1111.75,1168.024 1138.8,1162.912" fill="none" stroke="#c8c8c8" stroke-width="1" opacity="0.85"/><path d="M1084.7,1160.072 Q1111.75,1164.616 1138.8,1159.22" fill="none" stroke="#888" stroke-width="0.7" opacity="0.6"/><circle cx="1131.767" cy="1165.184" r="6" fill="#30c030" opacity="0.35" filter="url(#bl2)"/><line x1="1125.3" y1="1165.2" x2="1138.3" y2="1165.2" stroke="#30c030" stroke-width="0.5" opacity="0.7"/><line x1="1125.5" y1="1163.5" x2="1138.0" y2="1166.9" stroke="#30c030" stroke-width="0.5" opacity="0.7"/><line x1="1126.1" y1="1161.9" x2="1137.4" y2="1168.4" stroke="#30c030" stroke-width="0.5" opacity="0.7"/><line x1="1127.2" y1="1160.6" x2="1136.4" y2="1169.8" stroke="#30c030" stroke-width="0.5" opacity="0.7"/><line x1="1128.5" y1="1159.6" x2="1135.0" y2="1170.8" stroke="#30c030" stroke-width="0.5" opacity="0.7"/><line x1="1130.1" y1="1158.9" x2="1133.4" y2="1171.5" stroke="#30c030" stroke-width="0.5" opacity="0.7"/><line x1="1131.8" y1="1158.7" x2="1131.8" y2="1171.7" stroke="#30c030" stroke-width="0.5" opacity="0.7"/><line x1="1133.4" y1="1158.9" x2="1130.1" y2="1171.5" stroke="#30c030" stroke-width="0.5" opacity="0.7"/><line x1="1135.0" y1="1159.6" x2="1128.5" y2="1170.8" stroke="#30c030" stroke-width="0.5" opacity="0.7"/><line x1="1136.4" y1="1160.6" x2="1127.2" y2="1169.8" stroke="#30c030" stroke-width="0.5" opacity="0.7"/><line x1="1137.4" y1="1161.9" x2="1126.1" y2="1168.4" stroke="#30c030" stroke-width="0.5" opacity="0.7"/><line x1="1138.0" y1="1163.5" x2="1125.5" y2="1166.9" stroke="#30c030" stroke-width="0.5" opacity="0.7"/><circle cx="1131.767" cy="1165.184" r="1.8" fill="#50e050" opacity="0.7"/>
<rect x="1142.2" y="1143.6" width="54.2" height="28.40000000000009" fill="#131313"/><path d="M1142.2,1163.48 Q1169.3,1168.024 1196.4,1162.912 L1196.4,1172.0 L1142.2,1172.0 Z" fill="#1c1c1c"/><path d="M1142.2,1163.48 Q1169.3,1168.024 1196.4,1162.912" fill="none" stroke="#c8c8c8" stroke-width="1" opacity="0.85"/><path d="M1142.2,1160.072 Q1169.3,1164.616 1196.4,1159.22" fill="none" stroke="#888" stroke-width="0.7" opacity="0.6"/><circle cx="1189.354" cy="1165.184" r="6" fill="#30c030" opacity="0.35" filter="url(#bl2)"/><line x1="1182.9" y1="1165.2" x2="1195.9" y2="1165.2" stroke="#30c030" stroke-width="0.5" opacity="0.7"/><line x1="1183.1" y1="1163.5" x2="1195.6" y2="1166.9" stroke="#30c030" stroke-width="0.5" opacity="0.7"/><line x1="1183.7" y1="1161.9" x2="1195.0" y2="1168.4" stroke="#30c030" stroke-width="0.5" opacity="0.7"/><line x1="1184.8" y1="1160.6" x2="1194.0" y2="1169.8" stroke="#30c030" stroke-width="0.5" opacity="0.7"/><line x1="1186.1" y1="1159.6" x2="1192.6" y2="1170.8" stroke="#30c030" stroke-width="0.5" opacity="0.7"/><line x1="1187.7" y1="1158.9" x2="1191.0" y2="1171.5" stroke="#30c030" stroke-width="0.5" opacity="0.7"/><line x1="1189.4" y1="1158.7" x2="1189.4" y2="1171.7" stroke="#30c030" stroke-width="0.5" opacity="0.7"/><line x1="1191.0" y1="1158.9" x2="1187.7" y2="1171.5" stroke="#30c030" stroke-width="0.5" opacity="0.7"/><line x1="1192.6" y1="1159.6" x2="1186.1" y2="1170.8" stroke="#30c030" stroke-width="0.5" opacity="0.7"/><line x1="1194.0" y1="1160.6" x2="1184.8" y2="1169.8" stroke="#30c030" stroke-width="0.5" opacity="0.7"/><line x1="1195.0" y1="1161.9" x2="1183.7" y2="1168.4" stroke="#30c030" stroke-width="0.5" opacity="0.7"/><line x1="1195.6" y1="1163.5" x2="1183.1" y2="1166.9" stroke="#30c030" stroke-width="0.5" opacity="0.7"/><circle cx="1189.354" cy="1165.184" r="1.8" fill="#50e050" opacity="0.7"/>
</svg>
<div class="a" style="left:1179.5px;top:898.5px;width:30px;height:30px;border-radius:50%;background:rgba(218,50,72,0.85)"><svg class="a" style="left:11px;top:11px" width="8" height="8" viewBox="0 0 8 8"><path d="M1.5,1.5 L6.5,6.5 M6.5,1.5 L1.5,6.5" stroke="#fff" stroke-width="1.8"/></svg></div>
<svg class="a" style="left:165px;top:1082px" width="40" height="58" viewBox="0 0 40 58"><path d="M30.5,7.3 L9,29 L30.5,50.7" fill="none" stroke="#1877e5" stroke-width="3" stroke-linecap="round" stroke-linejoin="round"/></svg>
<svg class="a" style="left:1477px;top:1082px" width="40" height="58" viewBox="0 0 40 58"><path d="M9,7.3 L31,29 L9,50.7" fill="none" stroke="#1877e5" stroke-width="3" stroke-linecap="round" stroke-linejoin="round"/></svg><!--/OCT-->
</body></html>
